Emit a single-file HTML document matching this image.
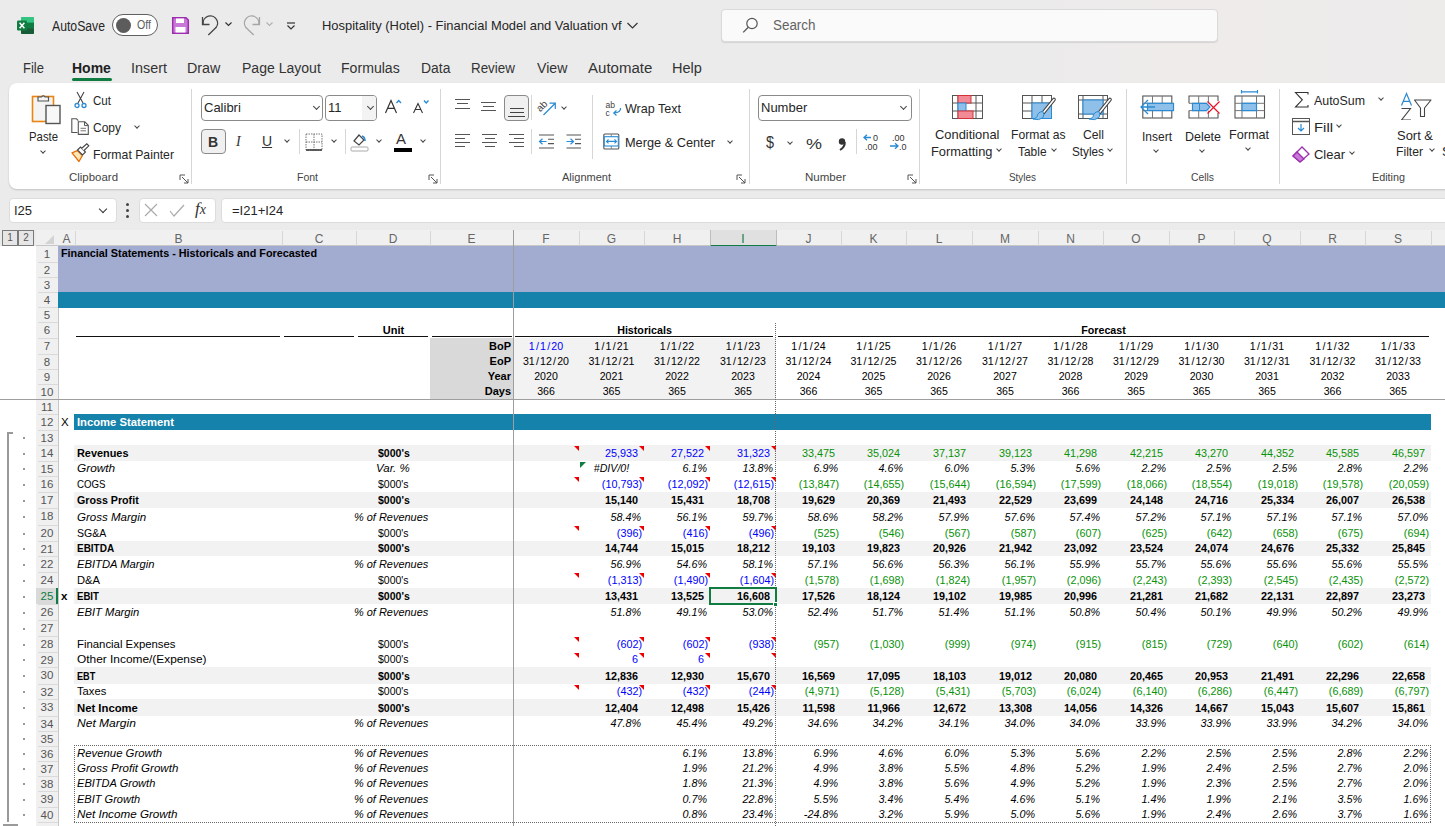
<!DOCTYPE html><html><head><meta charset="utf-8"><style>
*{box-sizing:border-box}
html,body{margin:0;padding:0}
body{width:1445px;height:826px;overflow:hidden;position:relative;background:#ebebeb;font-family:'Liberation Sans',sans-serif;color:#222}
.a{position:absolute;white-space:nowrap}
.tab{position:absolute;top:58px;font-size:14px;color:#333;line-height:18px}
.rl{position:absolute;font-size:12.3px;color:#262626;line-height:15px;white-space:nowrap}
.gl{position:absolute;font-size:12px;color:#444;line-height:14px;white-space:nowrap;text-align:center}
.sep{position:absolute;width:1px;background:#d6d6d6}
.chev{position:absolute;width:5px;height:5px;border-right:1.2px solid #444;border-bottom:1.2px solid #444;transform:rotate(45deg)}
.ch{position:absolute;color:#666;font-size:12px;line-height:12px;text-align:center}
.row{position:absolute;left:0;width:1445px}
.c{position:absolute;white-space:nowrap;font-size:11px;line-height:12px;color:#000}
.rh{position:absolute;left:36px;width:22px;text-align:center;font-size:11.5px;color:#555;line-height:12px}
.tri{position:absolute;width:0;height:0;border-top:5px solid #e00;border-left:5px solid transparent}
</style></head><body>
<div class="a" style="left:0;top:0;width:1445px;height:83px;background:linear-gradient(to right,#ebebeb 0%,#ebebeb 70%,#efebeb 82%,#eeebeb 90%,#edeceb 100%)"></div>
<svg class="a" style="left:16px;top:16px" width="19" height="19" viewBox="0 0 19 19">
<rect x="5" y="1" width="13" height="17" rx="1.5" fill="#21a366"/>
<rect x="5" y="1" width="13" height="5.7" rx="1" fill="#33c481"/>
<rect x="5" y="6.7" width="13" height="5.6" fill="#107c41"/>
<rect x="5" y="12.3" width="13" height="5.7" rx="1" fill="#185c37"/>
<rect x="1" y="4.5" width="10" height="10" rx="1.2" fill="#107c41"/>
<path d="M3.6 6.8 L8.4 12.2 M8.4 6.8 L3.6 12.2" stroke="#fff" stroke-width="1.5"/>
</svg>
<div class="a" style="left:52.00px;top:18.85px;font-size:14px;line-height:14px;color:#262626;transform:scaleX(0.8733);transform-origin:0 0;">AutoSave</div>
<div class="a" style="left:112px;top:14px;width:46px;height:22px;border:1px solid #606060;border-radius:11px;background:#fff"></div>
<div class="a" style="left:116px;top:18px;width:15px;height:15px;border-radius:8px;background:#5c5c5c"></div>
<div class="a" style="left:137.00px;top:19.22px;font-size:12.5px;line-height:12.5px;color:#5c5c5c;transform:scaleX(0.8485);transform-origin:0 0;">Off</div>
<svg class="a" style="left:171px;top:16px" width="19" height="19" viewBox="0 0 19 19">
<path d="M1.7 1.7h13.3l2.3 2.3v13.3h-15.6z" fill="#c977d8" stroke="#9b2fae" stroke-width="1.5"/>
<rect x="5" y="2.5" width="8" height="4.5" fill="#fff"/>
<rect x="4.5" y="11" width="10" height="5.5" fill="#fff"/>
</svg>
<svg class="a" style="left:200px;top:15px" width="22" height="21" viewBox="200 15 22 21">
<path d="M202.5 17 V24.5 H209.5" fill="none" stroke="#444" stroke-width="1.3"/>
<path d="M203.2 24 A7.2 7.2 0 1 1 214.5 29 L208.3 35" fill="none" stroke="#444" stroke-width="1.3"/>
</svg>
<svg class="a" style="left:224px;top:21px" width="9" height="7" viewBox="0 0 9 7"><path d="M1.5 1.5 L4.5 4.5 L7.5 1.5" fill="none" stroke="#333" stroke-width="1.2"/></svg>
<svg class="a" style="left:242px;top:15px" width="22" height="21" viewBox="242 15 22 21">
<path d="M259.5 17 V24.5 H252.5" fill="none" stroke="#a6a6a6" stroke-width="1.3"/>
<path d="M258.8 24 A7.2 7.2 0 1 0 247.5 29 L253.7 35" fill="none" stroke="#a6a6a6" stroke-width="1.3"/>
</svg>
<svg class="a" style="left:265px;top:21px" width="9" height="7" viewBox="0 0 9 7"><path d="M1.5 1.5 L4.5 4.5 L7.5 1.5" fill="none" stroke="#b0b0b0" stroke-width="1.1"/></svg>
<svg class="a" style="left:285px;top:20px" width="12" height="12" viewBox="0 0 12 12">
<path d="M2 3h8" stroke="#333" stroke-width="1.2"/><path d="M2.5 5.5 L6 9 L9.5 5.5" fill="none" stroke="#333" stroke-width="1.2"/></svg>
<div class="a" style="left:322.00px;top:19.27px;font-size:13.5px;line-height:13.5px;color:#262626;transform:scaleX(0.9579);transform-origin:0 0;">Hospitality (Hotel) - Financial Model and Valuation vf</div>
<svg class="a" style="left:626px;top:21px" width="13" height="9" viewBox="0 0 13 9"><path d="M1.5 2 L6.5 7 L11.5 2" fill="none" stroke="#333" stroke-width="1.2"/></svg>
<div class="a" style="left:721px;top:9px;width:497px;height:33px;background:#fafafa;border:1px solid #dadada;border-radius:4px;box-shadow:0 1px 1px rgba(0,0,0,.10)"></div>
<svg class="a" style="left:740px;top:15px" width="20" height="20" viewBox="740 15 20 20">
<circle cx="752" cy="23.5" r="5.2" fill="none" stroke="#555" stroke-width="1.2"/><path d="M748.3 27.3 L743.2 32.4" stroke="#555" stroke-width="1.3"/></svg>
<div class="a" style="left:773.00px;top:18.15px;font-size:14px;line-height:14px;color:#636363;transform:scaleX(0.9576);transform-origin:0 0;">Search</div>
<div class="a" style="left:22.90px;top:60.75px;font-size:14px;line-height:14px;color:#333;transform:scaleX(0.9272);transform-origin:0 0;">File</div>
<div class="a" style="left:72.20px;top:60.75px;font-size:14px;line-height:14px;color:#1f1f1f;transform:scaleX(0.9995);transform-origin:0 0;font-weight:bold;">Home</div>
<div class="a" style="left:131.00px;top:60.75px;font-size:14px;line-height:14px;color:#333;transform:scaleX(1.0257);transform-origin:0 0;">Insert</div>
<div class="a" style="left:187.30px;top:60.75px;font-size:14px;line-height:14px;color:#333;transform:scaleX(1.0217);transform-origin:0 0;">Draw</div>
<div class="a" style="left:241.60px;top:60.75px;font-size:14px;line-height:14px;color:#333;transform:scaleX(1.0024);transform-origin:0 0;">Page Layout</div>
<div class="a" style="left:341.30px;top:60.75px;font-size:14px;line-height:14px;color:#333;transform:scaleX(1.0072);transform-origin:0 0;">Formulas</div>
<div class="a" style="left:421.00px;top:60.75px;font-size:14px;line-height:14px;color:#333;transform:scaleX(0.9929);transform-origin:0 0;">Data</div>
<div class="a" style="left:471.30px;top:60.75px;font-size:14px;line-height:14px;color:#333;transform:scaleX(0.9560);transform-origin:0 0;">Review</div>
<div class="a" style="left:537.10px;top:60.75px;font-size:14px;line-height:14px;color:#333;transform:scaleX(1.0100);transform-origin:0 0;">View</div>
<div class="a" style="left:587.90px;top:60.75px;font-size:14px;line-height:14px;color:#333;transform:scaleX(1.0731);transform-origin:0 0;">Automate</div>
<div class="a" style="left:672.10px;top:60.75px;font-size:14px;line-height:14px;color:#333;transform:scaleX(1.0393);transform-origin:0 0;">Help</div>
<div class="a" style="left:72px;top:78px;width:40px;height:3px;background:#107c41;border-radius:2px"></div>
<div class="a" style="left:9px;top:83px;width:1460px;height:106px;background:#fff;border-radius:8px;box-shadow:0 1px 2px rgba(0,0,0,.18)"></div>
<svg class="a" style="left:30px;top:91px" width="32" height="34" viewBox="0 0 32 34">
<rect x="2.5" y="5.5" width="21" height="25" fill="#fdf3dc" stroke="#e8851a" stroke-width="1.6"/>
<rect x="4" y="7" width="18" height="22" fill="#f4f4f4"/>
<path d="M8 10 V6 h3.5 a2 2 0 0 1 3.5 0 h3.5 v4z" fill="#f4f4f4" stroke="#555" stroke-width="1.2"/>
<rect x="16" y="14.5" width="14" height="18" fill="#f8f8f8" stroke="#555" stroke-width="1.4"/>
</svg>
<div class="a" style="left:29.00px;top:129.57px;font-size:13.5px;line-height:13.5px;color:#262626;transform:scaleX(0.8408);transform-origin:0 0;">Paste</div>
<div class="chev" style="left:41px;top:149px;width:4px;height:4px"></div>
<svg class="a" style="left:73px;top:91px" width="15" height="18" viewBox="0 0 15 18">
<path d="M4 1 L10 12 M11 1 L5 12" stroke="#444" stroke-width="1.1" fill="none"/>
<circle cx="4" cy="14.5" r="2" fill="none" stroke="#2a8ad4" stroke-width="1.3"/><circle cx="11" cy="14.5" r="2" fill="none" stroke="#2a8ad4" stroke-width="1.3"/></svg>
<div class="a" style="left:93.00px;top:93.57px;font-size:13.5px;line-height:13.5px;color:#262626;transform:scaleX(0.8574);transform-origin:0 0;">Cut</div>
<svg class="a" style="left:69px;top:116px" width="22" height="21" viewBox="69 116 22 21">
<path d="M77.5 132.5 H71.8 V118.8 H76.5 L78.3 120.6" fill="none" stroke="#555" stroke-width="1.1"/>
<path d="M78.3 121.8 H84.8 L88.3 125.3 V134.4 H78.3z" fill="#fff" stroke="#555" stroke-width="1.1"/>
<path d="M84.5 122 V125.6 H88" fill="none" stroke="#555" stroke-width="1"/>
<path d="M80.5 128.3 H86 M80.5 130.8 H86" stroke="#666" stroke-width="0.9"/></svg>
<div class="a" style="left:93.00px;top:120.57px;font-size:13.5px;line-height:13.5px;color:#262626;transform:scaleX(0.8883);transform-origin:0 0;">Copy</div>
<div class="chev" style="left:135px;top:124px;width:4px;height:4px"></div>
<svg class="a" style="left:70px;top:143px" width="22" height="21" viewBox="70 143 22 21">
<path d="M72 152.8 L77.3 150.6 L82.3 155.6 L79 161.5z" fill="#fde6b8" stroke="#e8700a" stroke-width="1.3" stroke-linejoin="round"/>
<path d="M77.5 150 L80.5 147 L85.5 152 L82.5 155z" fill="#fff" stroke="#444" stroke-width="1.1"/>
<path d="M81.5 148.5 L86.8 143.8 L88.8 145.8 L84 150.5" fill="#fff" stroke="#444" stroke-width="1.1"/></svg>
<div class="a" style="left:93.00px;top:147.57px;font-size:13.5px;line-height:13.5px;color:#262626;transform:scaleX(0.9070);transform-origin:0 0;">Format Painter</div>
<div class="a" style="left:69.00px;top:172.27px;font-size:11.5px;line-height:11.5px;color:#444;transform:scaleX(0.9955);transform-origin:0 0;">Clipboard</div>
<svg class="a" style="left:179px;top:174px" width="10" height="10" viewBox="0 0 10 10">
<path d="M1 6 V1 H6" fill="none" stroke="#555" stroke-width="1"/><path d="M3 3 L9 9 M5 9 H9 V5" fill="none" stroke="#555" stroke-width="1"/></svg>
<div class="sep" style="left:191px;top:89px;height:95px"></div>
<div class="a" style="left:201px;top:95px;width:122px;height:26px;border:1px solid #8a8a8a;border-radius:4px;background:#fff"></div>
<div class="a" style="left:204px;top:100px;font-size:13px;color:#262626;line-height:16px">Calibri</div>
<div class="chev" style="left:314px;top:104px;width:5px;height:5px"></div>
<div class="a" style="left:325px;top:95px;width:52px;height:26px;border:1px solid #8a8a8a;border-radius:4px;background:#fff;overflow:hidden"><div style="position:absolute;right:0;top:0;width:14px;height:24px;background:#f3f3f3"></div></div>
<div class="a" style="left:328px;top:100px;font-size:13px;color:#262626;line-height:16px">11</div>
<div class="chev" style="left:368px;top:104px;width:5px;height:5px"></div>
<svg class="a" style="left:383px;top:97px" width="48" height="18" viewBox="383 97 48 18">
<path d="M385.5 113 L391 100.5 L396.5 113 M387.6 108.3 H394.4" fill="none" stroke="#333" stroke-width="1.2"/>
<path d="M396.5 103 L398.7 100.5 L401 103" fill="none" stroke="#2a8ad4" stroke-width="1.3"/>
<path d="M413.5 113 L418 103.5 L422.5 113 M415.2 109.5 H420.8" fill="none" stroke="#333" stroke-width="1.1"/>
<path d="M424 100.5 L426.2 103 L428.5 100.5" fill="none" stroke="#2a8ad4" stroke-width="1.3"/>
</svg>
<div class="a" style="left:201px;top:129px;width:25px;height:25px;border:1px solid #8a8a8a;border-radius:4px;background:#f0f0f0"></div>
<div class="a" style="left:208px;top:134px;font-size:14px;font-weight:bold;color:#333;line-height:16px">B</div>
<div class="a" style="left:236px;top:134px;font-size:14px;font-style:italic;color:#333;line-height:16px;font-family:Liberation Serif">I</div>
<div class="a" style="left:262px;top:133px;font-size:14px;text-decoration:underline;color:#333;line-height:16px">U</div>
<div class="chev" style="left:285px;top:138px;width:4px;height:4px"></div>
<div class="sep" style="left:299px;top:129px;height:25px"></div>
<svg class="a" style="left:305px;top:133px" width="18" height="18" viewBox="0 0 18 18">
<path d="M1 1h16v16H1z M9 1v16 M1 9h16" fill="none" stroke="#777" stroke-width="1" stroke-dasharray="1.5 1"/>
<path d="M1 17h16" stroke="#333" stroke-width="1.5"/></svg>
<div class="chev" style="left:332px;top:138px;width:4px;height:4px"></div>
<div class="sep" style="left:345px;top:129px;height:25px"></div>
<svg class="a" style="left:350px;top:132px" width="20" height="20" viewBox="0 0 20 20">
<path d="M4 9 L9 3 L14 8 L9 13z" fill="#fff" stroke="#444" stroke-width="1.2"/>
<path d="M12 4 q3 1 3 5" fill="none" stroke="#2a8ad4" stroke-width="1.6"/>
<rect x="1" y="15" width="17" height="4" rx="1" fill="#fff" stroke="#aaa"/></svg>
<div class="chev" style="left:377px;top:138px;width:4px;height:4px"></div>
<div class="a" style="left:396px;top:131px;font-size:15px;color:#333;line-height:16px">A</div>
<div class="a" style="left:394px;top:148px;width:18px;height:4px;background:#000"></div>
<div class="chev" style="left:421px;top:138px;width:4px;height:4px"></div>
<div class="a" style="left:297.00px;top:172.27px;font-size:11.5px;line-height:11.5px;color:#444;transform:scaleX(0.9130);transform-origin:0 0;">Font</div>
<svg class="a" style="left:428px;top:174px" width="10" height="10" viewBox="0 0 10 10">
<path d="M1 6 V1 H6" fill="none" stroke="#555" stroke-width="1"/><path d="M3 3 L9 9 M5 9 H9 V5" fill="none" stroke="#555" stroke-width="1"/></svg>
<div class="sep" style="left:440px;top:89px;height:95px"></div>
<div class="a" style="left:455px;top:99px;width:15px;height:1.3px;background:#555"></div><div class="a" style="left:457px;top:103px;width:11px;height:1.3px;background:#555"></div>
<div class="a" style="left:455px;top:108px;width:15px;height:1.3px;background:#555"></div>
<div class="a" style="left:481px;top:102px;width:15px;height:1.3px;background:#555"></div><div class="a" style="left:483px;top:106px;width:11px;height:1.3px;background:#555"></div><div class="a" style="left:481px;top:110px;width:15px;height:1.3px;background:#555"></div>
<div class="a" style="left:504px;top:95px;width:25px;height:26px;border:1px solid #8a8a8a;border-radius:4px;background:#f0f0f0"></div>
<div class="a" style="left:510px;top:108px;width:14px;height:1.3px;background:#444"></div><div class="a" style="left:510px;top:112px;width:14px;height:1.3px;background:#444"></div><div class="a" style="left:508px;top:116px;width:17px;height:1.3px;background:#444"></div>
<div class="sep" style="left:531px;top:95px;height:25px"></div>
<svg class="a" style="left:534px;top:96px" width="26" height="22" viewBox="534 96 26 22">
<text x="536" y="110" font-size="10" fill="#444" transform="rotate(-45 541 106)" font-family="Liberation Sans">ab</text>
<path d="M543.5 115 L555 103.5 M549.5 103.2 H555.3 V109" fill="none" stroke="#2a8ad4" stroke-width="1.2"/></svg>
<div class="chev" style="left:562px;top:105px;width:4px;height:4px"></div>
<div class="a" style="left:455px;top:134px;width:15px;height:1.3px;background:#555"></div><div class="a" style="left:455px;top:138px;width:10px;height:1.3px;background:#555"></div><div class="a" style="left:455px;top:142px;width:15px;height:1.3px;background:#555"></div><div class="a" style="left:455px;top:146px;width:10px;height:1.3px;background:#555"></div>
<div class="a" style="left:482.0px;top:134px;width:15px;height:1.3px;background:#555"></div><div class="a" style="left:484.5px;top:138px;width:10px;height:1.3px;background:#555"></div><div class="a" style="left:482.0px;top:142px;width:15px;height:1.3px;background:#555"></div><div class="a" style="left:484.5px;top:146px;width:10px;height:1.3px;background:#555"></div>
<div class="a" style="left:509px;top:134px;width:15px;height:1.3px;background:#555"></div><div class="a" style="left:514px;top:138px;width:10px;height:1.3px;background:#555"></div><div class="a" style="left:509px;top:142px;width:15px;height:1.3px;background:#555"></div><div class="a" style="left:514px;top:146px;width:10px;height:1.3px;background:#555"></div>
<div class="sep" style="left:531px;top:129px;height:25px"></div>
<svg class="a" style="left:536px;top:130px" width="50" height="22" viewBox="536 130 50 22">
<path d="M539 135 H554 M548 139.3 H554 M548 143.6 H554 M539 148 H554" stroke="#555" stroke-width="1.1"/>
<path d="M539.5 141.5 H546.5 M542.5 138.8 L539.5 141.5 L542.5 144.2" fill="none" stroke="#2a8ad4" stroke-width="1.2"/>
<path d="M566.5 135 H581 M575 139.3 H581 M575 143.6 H581 M566.5 148 H581" stroke="#555" stroke-width="1.1"/>
<path d="M566.5 141.5 H573.5 M570.5 138.8 L573.5 141.5 L570.5 144.2" fill="none" stroke="#2a8ad4" stroke-width="1.2"/></svg>
<div class="sep" style="left:592px;top:95px;height:64px"></div>
<svg class="a" style="left:603px;top:98px" width="22" height="20" viewBox="603 98 22 20">
<text x="605.5" y="107.5" font-size="8.5" fill="#444" font-family="Liberation Sans">ab</text><text x="605.5" y="115.5" font-size="8.5" fill="#444" font-family="Liberation Sans">c</text>
<path d="M620.5 108 Q621 112.5 614 113 M616.5 110.5 L613.8 113 L616.5 115.5" fill="none" stroke="#2a8ad4" stroke-width="1.2"/></svg>
<div class="a" style="left:625.00px;top:101.57px;font-size:13.5px;line-height:13.5px;color:#262626;transform:scaleX(0.9290);transform-origin:0 0;">Wrap Text</div>
<svg class="a" style="left:602px;top:132px" width="20" height="20" viewBox="602 132 20 20">
<rect x="603.8" y="134" width="15" height="15" rx="1" fill="#fff" stroke="#555" stroke-width="1.1"/>
<path d="M611.3 134 V149" stroke="#888" stroke-width="1"/>
<rect x="604.3" y="136.7" width="14" height="9.3" fill="#fff" stroke="#2a8ad4" stroke-width="1.1"/>
<path d="M606.5 141.4 H616.5 M608.5 139.4 L606.5 141.4 L608.5 143.4 M614.5 139.4 L616.5 141.4 L614.5 143.4" fill="none" stroke="#2a8ad4" stroke-width="1.1"/></svg>
<div class="a" style="left:625.00px;top:135.57px;font-size:13.5px;line-height:13.5px;color:#262626;transform:scaleX(0.9443);transform-origin:0 0;">Merge &amp; Center</div>
<div class="chev" style="left:728px;top:139px;width:4px;height:4px"></div>
<div class="a" style="left:562.00px;top:172.27px;font-size:11.5px;line-height:11.5px;color:#444;transform:scaleX(0.9586);transform-origin:0 0;">Alignment</div>
<svg class="a" style="left:736px;top:174px" width="10" height="10" viewBox="0 0 10 10">
<path d="M1 6 V1 H6" fill="none" stroke="#555" stroke-width="1"/><path d="M3 3 L9 9 M5 9 H9 V5" fill="none" stroke="#555" stroke-width="1"/></svg>
<div class="sep" style="left:749px;top:89px;height:95px"></div>
<div class="a" style="left:758px;top:95px;width:154px;height:26px;border:1px solid #8a8a8a;border-radius:4px;background:#fff"></div>
<div class="a" style="left:761px;top:100px;font-size:13px;color:#262626;line-height:16px">Number</div>
<div class="chev" style="left:901px;top:104px;width:5px;height:5px"></div>
<div class="a" style="left:766.00px;top:135.46px;font-size:16px;line-height:16px;color:#333;transform:scaleX(0.9009);transform-origin:0 0;">$</div>
<div class="chev" style="left:788px;top:140px;width:4px;height:4px"></div>
<div class="a" style="left:806.00px;top:136.30px;font-size:15px;line-height:15px;color:#333;transform:scaleX(1.1985);transform-origin:0 0;">%</div>
<svg class="a" style="left:836px;top:137px" width="12" height="14" viewBox="0 0 12 14"><circle cx="6" cy="4.5" r="3.2" fill="#333"/><path d="M8.8 5 Q9 10 4 13" fill="none" stroke="#333" stroke-width="2"/></svg>
<div class="sep" style="left:856px;top:129px;height:25px"></div>
<svg class="a" style="left:862px;top:133px" width="19" height="18" viewBox="0 0 19 18">
<path d="M9 4.5 H2 M5 1.8 L2 4.5 L5 7.2" fill="none" stroke="#2a8ad4" stroke-width="1.3"/>
<text x="11" y="8" font-size="9" fill="#333" font-family="Liberation Sans">0</text>
<text x="3" y="17" font-size="9" fill="#333" font-family="Liberation Sans">.00</text></svg>
<svg class="a" style="left:889px;top:133px" width="19" height="18" viewBox="0 0 19 18">
<text x="3" y="8" font-size="9" fill="#333" font-family="Liberation Sans">.00</text>
<path d="M1 13 H9 M6 10.3 L9 13 L6 15.7" fill="none" stroke="#2a8ad4" stroke-width="1.3"/>
<text x="10" y="17" font-size="9" fill="#333" font-family="Liberation Sans">.0</text></svg>
<div class="a" style="left:805.00px;top:172.27px;font-size:11.5px;line-height:11.5px;color:#444;transform:scaleX(1.0029);transform-origin:0 0;">Number</div>
<svg class="a" style="left:907px;top:174px" width="10" height="10" viewBox="0 0 10 10">
<path d="M1 6 V1 H6" fill="none" stroke="#555" stroke-width="1"/><path d="M3 3 L9 9 M5 9 H9 V5" fill="none" stroke="#555" stroke-width="1"/></svg>
<div class="sep" style="left:919px;top:89px;height:95px"></div>
<svg class="a" style="left:952px;top:95px" width="31" height="25" viewBox="0 0 31 25">
<rect x="0.5" y="0.5" width="30" height="23" fill="#fff" stroke="#555"/>
<path d="M0.5 8h30 M0.5 16h30 M6 0.5v23 M24 0.5v23" stroke="#555"/>
<rect x="6" y="0.5" width="13" height="7.5" fill="#f28b95" stroke="#d13438"/>
<rect x="6" y="8" width="8" height="8" fill="#8fc0ea" stroke="#2a8ad4"/>
<rect x="6" y="16" width="15" height="7.5" fill="#f28b95" stroke="#d13438"/></svg>
<div class="a" style="left:934.50px;top:128.07px;font-size:13.5px;line-height:13.5px;color:#262626;transform:scaleX(0.9546);transform-origin:0 0;">Conditional</div>
<div class="a" style="left:930.50px;top:145.07px;font-size:13.5px;line-height:13.5px;color:#262626;transform:scaleX(0.9530);transform-origin:0 0;">Formatting</div>
<div class="chev" style="left:997px;top:147px;width:4px;height:4px"></div>
<svg class="a" style="left:1022px;top:95px" width="35" height="30" viewBox="0 0 35 30">
<rect x="0.5" y="0.5" width="29" height="23" fill="#fff" stroke="#555"/>
<path d="M0.5 8h29 M0.5 16h29 M10 0.5v23 M20 0.5v23" stroke="#555"/>
<rect x="10" y="8" width="19.5" height="15.5" fill="#8fc0ea" stroke="#2a8ad4"/>
<path d="M32 4.5 L21.5 17.5" stroke="#444" stroke-width="3.6" stroke-linecap="round"/><path d="M32 4.5 L21.5 17.5" stroke="#fff" stroke-width="1.6" stroke-linecap="round"/><path d="M21 16.5 q-5 0 -6 5 q-1 2 -4 2.5 q6 2 10 -1.5 q1.5 -3 0 -6z" fill="#8fc0ea" stroke="#2a8ad4" stroke-width="1"/></svg>
<div class="a" style="left:1010.50px;top:128.07px;font-size:13.5px;line-height:13.5px;color:#262626;transform:scaleX(0.8971);transform-origin:0 0;">Format as</div>
<div class="a" style="left:1017.50px;top:145.07px;font-size:13.5px;line-height:13.5px;color:#262626;transform:scaleX(0.8833);transform-origin:0 0;">Table</div>
<div class="chev" style="left:1052px;top:147px;width:4px;height:4px"></div>
<svg class="a" style="left:1078px;top:95px" width="35" height="30" viewBox="0 0 35 30">
<rect x="0.5" y="0.5" width="29" height="23" fill="#fff" stroke="#555"/>
<path d="M0.5 5h29 M0.5 19h29 M5 0.5v23 M25 0.5v23" stroke="#555"/>
<rect x="5" y="5" width="20" height="14" fill="#8fc0ea" stroke="#2a8ad4"/>
<path d="M32 4.5 L21.5 17.5" stroke="#444" stroke-width="3.6" stroke-linecap="round"/><path d="M32 4.5 L21.5 17.5" stroke="#fff" stroke-width="1.6" stroke-linecap="round"/><path d="M21 16.5 q-5 0 -6 5 q-1 2 -4 2.5 q6 2 10 -1.5 q1.5 -3 0 -6z" fill="#8fc0ea" stroke="#2a8ad4" stroke-width="1"/></svg>
<div class="a" style="left:1083.00px;top:128.07px;font-size:13.5px;line-height:13.5px;color:#262626;transform:scaleX(0.9018);transform-origin:0 0;">Cell</div>
<div class="a" style="left:1072.00px;top:145.07px;font-size:13.5px;line-height:13.5px;color:#262626;transform:scaleX(0.8699);transform-origin:0 0;">Styles</div>
<div class="chev" style="left:1108px;top:147px;width:4px;height:4px"></div>
<div class="a" style="left:1009.00px;top:172.27px;font-size:11.5px;line-height:11.5px;color:#444;transform:scaleX(0.8616);transform-origin:0 0;">Styles</div>
<div class="sep" style="left:1126px;top:89px;height:95px"></div>
<svg class="a" style="left:1138px;top:88px" width="40" height="34" viewBox="1138 88 40 34">
<rect x="1142.8" y="96" width="29" height="22" fill="#fff" stroke="#555" stroke-width="1.1"/>
<path d="M1142.8 103.3h29 M1142.8 110.6h29 M1152.5 96v22 M1162.2 96v22" stroke="#777" stroke-width="1"/>
<rect x="1147.5" y="103.3" width="26" height="7.3" fill="#8fc0ea" stroke="#2a8ad4" stroke-width="1.2"/>
<path d="M1141 107 H1155 M1148 100 L1141 107 L1148 114" fill="none" stroke="#2a8ad4" stroke-width="1.3"/></svg>
<div class="a" style="left:1142.00px;top:130.07px;font-size:13.5px;line-height:13.5px;color:#262626;transform:scaleX(0.8889);transform-origin:0 0;">Insert</div>
<div class="chev" style="left:1154px;top:148px;width:4px;height:4px"></div>
<svg class="a" style="left:1185px;top:88px" width="40" height="34" viewBox="1185 88 40 34">
<path d="M1189 103.3 V96 H1218 V101 M1218 113 V118 H1189 V110.6" fill="#fff" stroke="#555" stroke-width="1.1"/>
<path d="M1189 103.3h18 M1189 110.6h18 M1198.7 96v7.3 M1208.4 96v7.3 M1198.7 110.6v7.4 M1208.4 110.6v7.4" stroke="#777" stroke-width="1"/>
<path d="M1192.5 103.3 H1206.5 L1210 107 L1206.5 110.6 H1192.5z" fill="#8fc0ea" stroke="#2a8ad4" stroke-width="1.2"/>
<path d="M1199.5 103.3 V110.6" stroke="#2a8ad4" stroke-width="1"/>
<path d="M1207.5 101.5 L1219.5 113.5 M1219.5 101.5 L1207.5 113.5" stroke="#e81123" stroke-width="1.2"/></svg>
<div class="a" style="left:1185.00px;top:130.07px;font-size:13.5px;line-height:13.5px;color:#262626;transform:scaleX(0.9227);transform-origin:0 0;">Delete</div>
<div class="chev" style="left:1200px;top:148px;width:4px;height:4px"></div>
<svg class="a" style="left:1232px;top:88px" width="36" height="34" viewBox="1232 88 36 34">
<path d="M1241.5 91.8 H1257.5 M1241.5 90 V93.5 M1257.5 90 V93.5" stroke="#2a8ad4" stroke-width="1.2"/>
<rect x="1235" y="96" width="29.5" height="22" fill="#fff" stroke="#555" stroke-width="1.1"/>
<path d="M1235 103.3h29.5 M1235 110.6h29.5 M1242 96v22 M1256.5 96v22" stroke="#777" stroke-width="1"/>
<rect x="1242" y="103.3" width="14.5" height="7.3" fill="#8fc0ea" stroke="#2a8ad4" stroke-width="1.2"/></svg>
<div class="a" style="left:1229.00px;top:128.07px;font-size:13.5px;line-height:13.5px;color:#262626;transform:scaleX(0.9362);transform-origin:0 0;">Format</div>
<div class="chev" style="left:1246px;top:146px;width:4px;height:4px"></div>
<div class="a" style="left:1191.00px;top:172.27px;font-size:11.5px;line-height:11.5px;color:#444;transform:scaleX(0.8989);transform-origin:0 0;">Cells</div>
<div class="sep" style="left:1279px;top:89px;height:95px"></div>
<svg class="a" style="left:1290px;top:88px" width="22" height="22" viewBox="1290 88 22 22"><path d="M1308 94.5 V92.5 H1295.5 L1302.3 99.8 L1295.5 107 H1308 V105" fill="none" stroke="#333" stroke-width="1.1"/></svg>
<div class="a" style="left:1314.00px;top:94.07px;font-size:13.5px;line-height:13.5px;color:#262626;transform:scaleX(0.9181);transform-origin:0 0;">AutoSum</div>
<div class="chev" style="left:1379px;top:96px;width:4px;height:4px"></div>
<svg class="a" style="left:1292px;top:118px" width="18" height="17" viewBox="0 0 18 17">
<rect x="0.5" y="0.5" width="17" height="16" fill="#fff" stroke="#555"/><path d="M0.5 3.5h17" stroke="#555" stroke-width="1.5"/>
<path d="M9 6v7 M6 10 L9 13 L12 10" fill="none" stroke="#2a8ad4" stroke-width="1.2"/></svg>
<div class="a" style="left:1314.00px;top:120.57px;font-size:13.5px;line-height:13.5px;color:#262626;transform:scaleX(1.1038);transform-origin:0 0;">Fill</div>
<div class="chev" style="left:1337px;top:123px;width:4px;height:4px"></div>
<svg class="a" style="left:1292px;top:145px" width="18" height="18" viewBox="0 0 18 18">
<path d="M1 11 L10 2 L17 9 L8 17z" fill="#fff" stroke="#9b2fae" stroke-width="1.3"/><path d="M1 11 L5 7 L12 14 L8 17z" fill="#c977d8" stroke="#9b2fae" stroke-width="1.3"/></svg>
<div class="a" style="left:1314.00px;top:147.57px;font-size:13.5px;line-height:13.5px;color:#262626;transform:scaleX(0.9608);transform-origin:0 0;">Clear</div>
<div class="chev" style="left:1350px;top:150px;width:4px;height:4px"></div>
<svg class="a" style="left:1398px;top:90px" width="36" height="30" viewBox="1398 90 36 30">
<path d="M1401.5 105.5 L1406.5 93.5 L1411.5 105.5 M1403.3 101.3 H1409.7" fill="none" stroke="#2a8ad4" stroke-width="1.2"/>
<path d="M1401.5 108.5 H1410.5 L1401.5 120 H1411" fill="none" stroke="#444" stroke-width="1.1"/>
<path d="M1414.5 100 H1431 L1424.5 108 V116.5 H1420.5 V108z" fill="#fff" stroke="#444" stroke-width="1.1" stroke-linejoin="round"/></svg>
<div class="a" style="left:1397.00px;top:128.57px;font-size:13.5px;line-height:13.5px;color:#262626;transform:scaleX(0.9592);transform-origin:0 0;">Sort &amp;</div>
<div class="a" style="left:1396.00px;top:145.07px;font-size:13.5px;line-height:13.5px;color:#262626;transform:scaleX(0.9009);transform-origin:0 0;">Filter</div>
<div class="chev" style="left:1430px;top:147px;width:4px;height:4px"></div>
<div class="a" style="left:1372.00px;top:172.27px;font-size:11.5px;line-height:11.5px;color:#444;transform:scaleX(0.9378);transform-origin:0 0;">Editing</div>
<div class="a" style="left:1442px;top:144.5px;font-size:13.5px;line-height:13.5px;color:#262626">S</div>
<div class="a" style="left:9px;top:198px;width:108px;height:25px;background:#fff;border:1px solid #dcdcdc;border-radius:4px"></div>
<div class="a" style="left:14px;top:203px;font-size:13px;color:#262626;line-height:15px">I25</div>
<div class="chev" style="left:100px;top:206px;width:6px;height:6px;border-color:#333"></div>
<div class="a" style="left:126px;top:203px;width:3px;height:3px;border-radius:2px;background:#444"></div><div class="a" style="left:126px;top:209px;width:3px;height:3px;border-radius:2px;background:#444"></div><div class="a" style="left:126px;top:215px;width:3px;height:3px;border-radius:2px;background:#444"></div>
<div class="a" style="left:139px;top:198px;width:77px;height:25px;background:#fff;border:1px solid #dcdcdc;border-radius:4px"></div>
<svg class="a" style="left:143px;top:202px" width="70" height="18" viewBox="0 0 70 18">
<path d="M2 2 L14 14 M14 2 L2 14" stroke="#aaa" stroke-width="1.2"/>
<path d="M27 9 L31 14 L41 3" fill="none" stroke="#aaa" stroke-width="1.2"/></svg>
<div class="a" style="left:195px;top:199px;font-size:17px;font-style:italic;color:#333;line-height:20px;font-family:Liberation Serif">f<span style="font-size:14px">x</span></div>
<div class="a" style="left:221px;top:198px;width:1240px;height:25px;background:#fff;border:1px solid #dcdcdc;border-radius:4px"></div>
<div class="a" style="left:232px;top:203px;font-size:13px;color:#262626;line-height:15px">=I21+I24</div>
<div class="a" style="left:0;top:246px;width:1445px;height:580px;background:#fff"></div>
<div class="a" style="left:36px;top:230px;width:1409px;height:16px;background:#f0f0f0;border-bottom:1px solid #c6c6c6"></div>
<div class="a" style="left:36px;top:246px;width:23px;height:580px;background:#f0f0f0;border-right:1px solid #c6c6c6"></div>
<div class="a" style="left:2px;top:230px;width:16px;height:16px;border:1px solid #7a7a7a;background:#e6e6e6;font-size:10px;color:#555;text-align:center;line-height:14px">1</div>
<div class="a" style="left:18px;top:230px;width:16px;height:16px;border:1px solid #7a7a7a;background:#e6e6e6;font-size:10px;color:#555;text-align:center;line-height:14px">2</div>
<div class="a" style="left:45px;top:235px;width:0;height:0;border-bottom:9px solid #d3d3d3;border-left:9px solid transparent"></div>
<div class="ch" style="left:58px;top:233px;width:17px;">A</div>
<div class="ch" style="left:75px;top:233px;width:207px;">B</div>
<div class="a" style="left:75px;top:231px;width:1px;height:15px;background:#d6d6d6"></div>
<div class="ch" style="left:282px;top:233px;width:74px;">C</div>
<div class="a" style="left:282px;top:231px;width:1px;height:15px;background:#d6d6d6"></div>
<div class="ch" style="left:356px;top:233px;width:74px;">D</div>
<div class="a" style="left:356px;top:231px;width:1px;height:15px;background:#d6d6d6"></div>
<div class="ch" style="left:430px;top:233px;width:83px;">E</div>
<div class="a" style="left:430px;top:231px;width:1px;height:15px;background:#d6d6d6"></div>
<div class="ch" style="left:513px;top:233px;width:66px;">F</div>
<div class="a" style="left:513px;top:231px;width:1px;height:15px;background:#d6d6d6"></div>
<div class="ch" style="left:579px;top:233px;width:65px;">G</div>
<div class="a" style="left:579px;top:231px;width:1px;height:15px;background:#d6d6d6"></div>
<div class="ch" style="left:644px;top:233px;width:66px;">H</div>
<div class="a" style="left:644px;top:231px;width:1px;height:15px;background:#d6d6d6"></div>
<div class="a" style="left:710px;top:230px;width:67px;height:17px;background:#e0e0e0;border-left:1px solid #bdbdbd;border-right:1px solid #bdbdbd;border-bottom:2px solid #107c41"></div>
<div class="ch" style="left:710px;top:233px;width:66px;color:#107c41;">I</div>
<div class="ch" style="left:776px;top:233px;width:65px;">J</div>
<div class="ch" style="left:841px;top:233px;width:65px;">K</div>
<div class="a" style="left:841px;top:231px;width:1px;height:15px;background:#d6d6d6"></div>
<div class="ch" style="left:906px;top:233px;width:66px;">L</div>
<div class="a" style="left:906px;top:231px;width:1px;height:15px;background:#d6d6d6"></div>
<div class="ch" style="left:972px;top:233px;width:66px;">M</div>
<div class="a" style="left:972px;top:231px;width:1px;height:15px;background:#d6d6d6"></div>
<div class="ch" style="left:1038px;top:233px;width:65px;">N</div>
<div class="a" style="left:1038px;top:231px;width:1px;height:15px;background:#d6d6d6"></div>
<div class="ch" style="left:1103px;top:233px;width:66px;">O</div>
<div class="a" style="left:1103px;top:231px;width:1px;height:15px;background:#d6d6d6"></div>
<div class="ch" style="left:1169px;top:233px;width:65px;">P</div>
<div class="a" style="left:1169px;top:231px;width:1px;height:15px;background:#d6d6d6"></div>
<div class="ch" style="left:1234px;top:233px;width:66px;">Q</div>
<div class="a" style="left:1234px;top:231px;width:1px;height:15px;background:#d6d6d6"></div>
<div class="ch" style="left:1300px;top:233px;width:65px;">R</div>
<div class="a" style="left:1300px;top:231px;width:1px;height:15px;background:#d6d6d6"></div>
<div class="ch" style="left:1365px;top:233px;width:66px;">S</div>
<div class="a" style="left:1365px;top:231px;width:1px;height:15px;background:#d6d6d6"></div>
<div class="ch" style="left:1431px;top:233px;width:66px;">T</div>
<div class="a" style="left:1431px;top:231px;width:1px;height:15px;background:#d6d6d6"></div>
<div class="rh" style="top:248px;">1</div>
<div class="a" style="left:38px;top:262px;width:20px;height:1px;background:#dadada"></div>
<div class="rh" style="top:264px;">2</div>
<div class="a" style="left:38px;top:277px;width:20px;height:1px;background:#dadada"></div>
<div class="rh" style="top:279px;">3</div>
<div class="a" style="left:38px;top:292px;width:20px;height:1px;background:#dadada"></div>
<div class="rh" style="top:294px;">4</div>
<div class="a" style="left:38px;top:307px;width:20px;height:1px;background:#dadada"></div>
<div class="rh" style="top:309px;">5</div>
<div class="a" style="left:38px;top:322px;width:20px;height:1px;background:#dadada"></div>
<div class="rh" style="top:324px;">6</div>
<div class="a" style="left:38px;top:338px;width:20px;height:1px;background:#dadada"></div>
<div class="rh" style="top:340px;">7</div>
<div class="a" style="left:38px;top:354px;width:20px;height:1px;background:#dadada"></div>
<div class="rh" style="top:356px;">8</div>
<div class="a" style="left:38px;top:369px;width:20px;height:1px;background:#dadada"></div>
<div class="rh" style="top:371px;">9</div>
<div class="a" style="left:38px;top:384px;width:20px;height:1px;background:#dadada"></div>
<div class="rh" style="top:386px;">10</div>
<div class="a" style="left:38px;top:399px;width:20px;height:1px;background:#dadada"></div>
<div class="rh" style="top:401px;">11</div>
<div class="a" style="left:38px;top:414px;width:20px;height:1px;background:#dadada"></div>
<div class="rh" style="top:416px;">12</div>
<div class="a" style="left:38px;top:430px;width:20px;height:1px;background:#dadada"></div>
<div class="rh" style="top:432px;">13</div>
<div class="a" style="left:38px;top:445px;width:20px;height:1px;background:#dadada"></div>
<div class="rh" style="top:447px;">14</div>
<div class="a" style="left:38px;top:461px;width:20px;height:1px;background:#dadada"></div>
<div class="rh" style="top:463px;">15</div>
<div class="a" style="left:38px;top:476px;width:20px;height:1px;background:#dadada"></div>
<div class="rh" style="top:478px;">16</div>
<div class="a" style="left:38px;top:492px;width:20px;height:1px;background:#dadada"></div>
<div class="rh" style="top:494px;">17</div>
<div class="a" style="left:38px;top:508px;width:20px;height:1px;background:#dadada"></div>
<div class="rh" style="top:510px;">18</div>
<div class="a" style="left:38px;top:525px;width:20px;height:1px;background:#dadada"></div>
<div class="rh" style="top:527px;">20</div>
<div class="a" style="left:38px;top:541px;width:20px;height:1px;background:#dadada"></div>
<div class="rh" style="top:543px;">21</div>
<div class="a" style="left:38px;top:556px;width:20px;height:1px;background:#dadada"></div>
<div class="rh" style="top:558px;">22</div>
<div class="a" style="left:38px;top:572px;width:20px;height:1px;background:#dadada"></div>
<div class="rh" style="top:574px;">24</div>
<div class="a" style="left:38px;top:588px;width:20px;height:1px;background:#dadada"></div>
<div class="a" style="left:36px;top:588px;width:22px;height:16px;background:#d9d9d9;border-right:2px solid #107c41"></div>
<div class="rh" style="top:590px;color:#107c41;">25</div>
<div class="a" style="left:38px;top:604px;width:20px;height:1px;background:#dadada"></div>
<div class="rh" style="top:606px;">26</div>
<div class="a" style="left:38px;top:620px;width:20px;height:1px;background:#dadada"></div>
<div class="rh" style="top:622px;">27</div>
<div class="a" style="left:38px;top:636px;width:20px;height:1px;background:#dadada"></div>
<div class="rh" style="top:638px;">28</div>
<div class="a" style="left:38px;top:652px;width:20px;height:1px;background:#dadada"></div>
<div class="rh" style="top:654px;">29</div>
<div class="a" style="left:38px;top:667px;width:20px;height:1px;background:#dadada"></div>
<div class="rh" style="top:669px;">30</div>
<div class="a" style="left:38px;top:684px;width:20px;height:1px;background:#dadada"></div>
<div class="rh" style="top:686px;">32</div>
<div class="a" style="left:38px;top:699px;width:20px;height:1px;background:#dadada"></div>
<div class="rh" style="top:701px;">33</div>
<div class="a" style="left:38px;top:716px;width:20px;height:1px;background:#dadada"></div>
<div class="rh" style="top:718px;">34</div>
<div class="a" style="left:38px;top:731px;width:20px;height:1px;background:#dadada"></div>
<div class="rh" style="top:733px;">35</div>
<div class="a" style="left:38px;top:746px;width:20px;height:1px;background:#dadada"></div>
<div class="rh" style="top:748px;">36</div>
<div class="a" style="left:38px;top:761px;width:20px;height:1px;background:#dadada"></div>
<div class="rh" style="top:763px;">37</div>
<div class="a" style="left:38px;top:776px;width:20px;height:1px;background:#dadada"></div>
<div class="rh" style="top:778px;">38</div>
<div class="a" style="left:38px;top:791px;width:20px;height:1px;background:#dadada"></div>
<div class="rh" style="top:793px;">39</div>
<div class="a" style="left:38px;top:807px;width:20px;height:1px;background:#dadada"></div>
<div class="rh" style="top:809px;">40</div>
<div class="a" style="left:38px;top:822px;width:20px;height:1px;background:#dadada"></div>
<div class="a" style="left:58px;top:246px;width:1387px;height:46px;background:#a2abd0"></div>
<div class="a" style="left:58px;top:292px;width:1387px;height:16px;background:#1582ab"></div>
<div class="a" style="left:430px;top:338px;width:83px;height:61px;background:#d9d9d9"></div>
<div class="a" style="left:513px;top:338px;width:263px;height:61px;background:#f2f2f2"></div>
<div class="a" style="left:74px;top:414px;width:1357px;height:16px;background:#1582ab"></div>
<div class="a" style="left:74px;top:445px;width:1357px;height:16px;background:#f2f2f2"></div>
<div class="a" style="left:74px;top:492px;width:1357px;height:16px;background:#f2f2f2"></div>
<div class="a" style="left:74px;top:541px;width:1357px;height:15px;background:#f2f2f2"></div>
<div class="a" style="left:74px;top:588px;width:1357px;height:16px;background:#f2f2f2"></div>
<div class="a" style="left:74px;top:667px;width:1357px;height:17px;background:#f2f2f2"></div>
<div class="a" style="left:74px;top:699px;width:1357px;height:17px;background:#f2f2f2"></div>
<div class="a" style="left:76px;top:336px;width:204px;height:1px;background:#111"></div>
<div class="a" style="left:284px;top:336px;width:70px;height:1px;background:#111"></div>
<div class="a" style="left:358px;top:336px;width:70px;height:1px;background:#111"></div>
<div class="a" style="left:432px;top:336px;width:80px;height:1px;background:#111"></div>
<div class="a" style="left:515px;top:336px;width:258px;height:1px;background:#111"></div>
<div class="a" style="left:778px;top:336px;width:651px;height:1px;background:#111"></div>
<div class="a" style="left:61.00px;top:248.19px;font-size:11px;line-height:11px;color:#000;transform:scaleX(0.9830);transform-origin:0 0;font-weight:bold;">Financial Statements - Historicals and Forecasted</div>
<div class="c" style="top:324px;font-size:11px;color:#000;font-weight:bold;left:293.5px;width:200px;text-align:center;">Unit</div>
<div class="c" style="top:324px;font-size:10.7px;color:#000;font-weight:bold;left:544.5px;width:200px;text-align:center;">Historicals</div>
<div class="c" style="top:324px;font-size:10.7px;color:#000;font-weight:bold;left:1003.5px;width:200px;text-align:center;">Forecast</div>
<div class="c" style="top:340px;font-size:11px;color:#000;font-weight:bold;right:934px;">BoP</div>
<div class="c" style="top:355px;font-size:11px;color:#000;font-weight:bold;right:934px;">EoP</div>
<div class="c" style="top:370px;font-size:11px;color:#000;font-weight:bold;right:934px;">Year</div>
<div class="c" style="top:385px;font-size:11px;color:#000;font-weight:bold;right:934px;">Days</div>
<div class="c" style="top:340px;font-size:10.6px;color:#0000ff;left:446.0px;width:200px;text-align:center;">1<span style="padding:0 1.2px">/</span>1<span style="padding:0 1.2px">/</span>20</div>
<div class="c" style="top:355px;font-size:10.6px;color:#000;left:446.0px;width:200px;text-align:center;">31<span style="padding:0 1.2px">/</span>12<span style="padding:0 1.2px">/</span>20</div>
<div class="c" style="top:370px;font-size:10.6px;color:#000;left:446.0px;width:200px;text-align:center;">2020</div>
<div class="c" style="top:385px;font-size:10.6px;color:#000;left:446.0px;width:200px;text-align:center;">366</div>
<div class="c" style="top:340px;font-size:10.6px;color:#000;left:511.5px;width:200px;text-align:center;">1<span style="padding:0 1.2px">/</span>1<span style="padding:0 1.2px">/</span>21</div>
<div class="c" style="top:355px;font-size:10.6px;color:#000;left:511.5px;width:200px;text-align:center;">31<span style="padding:0 1.2px">/</span>12<span style="padding:0 1.2px">/</span>21</div>
<div class="c" style="top:370px;font-size:10.6px;color:#000;left:511.5px;width:200px;text-align:center;">2021</div>
<div class="c" style="top:385px;font-size:10.6px;color:#000;left:511.5px;width:200px;text-align:center;">365</div>
<div class="c" style="top:340px;font-size:10.6px;color:#000;left:577.0px;width:200px;text-align:center;">1<span style="padding:0 1.2px">/</span>1<span style="padding:0 1.2px">/</span>22</div>
<div class="c" style="top:355px;font-size:10.6px;color:#000;left:577.0px;width:200px;text-align:center;">31<span style="padding:0 1.2px">/</span>12<span style="padding:0 1.2px">/</span>22</div>
<div class="c" style="top:370px;font-size:10.6px;color:#000;left:577.0px;width:200px;text-align:center;">2022</div>
<div class="c" style="top:385px;font-size:10.6px;color:#000;left:577.0px;width:200px;text-align:center;">365</div>
<div class="c" style="top:340px;font-size:10.6px;color:#000;left:643.0px;width:200px;text-align:center;">1<span style="padding:0 1.2px">/</span>1<span style="padding:0 1.2px">/</span>23</div>
<div class="c" style="top:355px;font-size:10.6px;color:#000;left:643.0px;width:200px;text-align:center;">31<span style="padding:0 1.2px">/</span>12<span style="padding:0 1.2px">/</span>23</div>
<div class="c" style="top:370px;font-size:10.6px;color:#000;left:643.0px;width:200px;text-align:center;">2023</div>
<div class="c" style="top:385px;font-size:10.6px;color:#000;left:643.0px;width:200px;text-align:center;">365</div>
<div class="c" style="top:340px;font-size:10.6px;color:#000;left:708.5px;width:200px;text-align:center;">1<span style="padding:0 1.2px">/</span>1<span style="padding:0 1.2px">/</span>24</div>
<div class="c" style="top:355px;font-size:10.6px;color:#000;left:708.5px;width:200px;text-align:center;">31<span style="padding:0 1.2px">/</span>12<span style="padding:0 1.2px">/</span>24</div>
<div class="c" style="top:370px;font-size:10.6px;color:#000;left:708.5px;width:200px;text-align:center;">2024</div>
<div class="c" style="top:385px;font-size:10.6px;color:#000;left:708.5px;width:200px;text-align:center;">366</div>
<div class="c" style="top:340px;font-size:10.6px;color:#000;left:773.5px;width:200px;text-align:center;">1<span style="padding:0 1.2px">/</span>1<span style="padding:0 1.2px">/</span>25</div>
<div class="c" style="top:355px;font-size:10.6px;color:#000;left:773.5px;width:200px;text-align:center;">31<span style="padding:0 1.2px">/</span>12<span style="padding:0 1.2px">/</span>25</div>
<div class="c" style="top:370px;font-size:10.6px;color:#000;left:773.5px;width:200px;text-align:center;">2025</div>
<div class="c" style="top:385px;font-size:10.6px;color:#000;left:773.5px;width:200px;text-align:center;">365</div>
<div class="c" style="top:340px;font-size:10.6px;color:#000;left:839.0px;width:200px;text-align:center;">1<span style="padding:0 1.2px">/</span>1<span style="padding:0 1.2px">/</span>26</div>
<div class="c" style="top:355px;font-size:10.6px;color:#000;left:839.0px;width:200px;text-align:center;">31<span style="padding:0 1.2px">/</span>12<span style="padding:0 1.2px">/</span>26</div>
<div class="c" style="top:370px;font-size:10.6px;color:#000;left:839.0px;width:200px;text-align:center;">2026</div>
<div class="c" style="top:385px;font-size:10.6px;color:#000;left:839.0px;width:200px;text-align:center;">365</div>
<div class="c" style="top:340px;font-size:10.6px;color:#000;left:905.0px;width:200px;text-align:center;">1<span style="padding:0 1.2px">/</span>1<span style="padding:0 1.2px">/</span>27</div>
<div class="c" style="top:355px;font-size:10.6px;color:#000;left:905.0px;width:200px;text-align:center;">31<span style="padding:0 1.2px">/</span>12<span style="padding:0 1.2px">/</span>27</div>
<div class="c" style="top:370px;font-size:10.6px;color:#000;left:905.0px;width:200px;text-align:center;">2027</div>
<div class="c" style="top:385px;font-size:10.6px;color:#000;left:905.0px;width:200px;text-align:center;">365</div>
<div class="c" style="top:340px;font-size:10.6px;color:#000;left:970.5px;width:200px;text-align:center;">1<span style="padding:0 1.2px">/</span>1<span style="padding:0 1.2px">/</span>28</div>
<div class="c" style="top:355px;font-size:10.6px;color:#000;left:970.5px;width:200px;text-align:center;">31<span style="padding:0 1.2px">/</span>12<span style="padding:0 1.2px">/</span>28</div>
<div class="c" style="top:370px;font-size:10.6px;color:#000;left:970.5px;width:200px;text-align:center;">2028</div>
<div class="c" style="top:385px;font-size:10.6px;color:#000;left:970.5px;width:200px;text-align:center;">366</div>
<div class="c" style="top:340px;font-size:10.6px;color:#000;left:1036.0px;width:200px;text-align:center;">1<span style="padding:0 1.2px">/</span>1<span style="padding:0 1.2px">/</span>29</div>
<div class="c" style="top:355px;font-size:10.6px;color:#000;left:1036.0px;width:200px;text-align:center;">31<span style="padding:0 1.2px">/</span>12<span style="padding:0 1.2px">/</span>29</div>
<div class="c" style="top:370px;font-size:10.6px;color:#000;left:1036.0px;width:200px;text-align:center;">2029</div>
<div class="c" style="top:385px;font-size:10.6px;color:#000;left:1036.0px;width:200px;text-align:center;">365</div>
<div class="c" style="top:340px;font-size:10.6px;color:#000;left:1101.5px;width:200px;text-align:center;">1<span style="padding:0 1.2px">/</span>1<span style="padding:0 1.2px">/</span>30</div>
<div class="c" style="top:355px;font-size:10.6px;color:#000;left:1101.5px;width:200px;text-align:center;">31<span style="padding:0 1.2px">/</span>12<span style="padding:0 1.2px">/</span>30</div>
<div class="c" style="top:370px;font-size:10.6px;color:#000;left:1101.5px;width:200px;text-align:center;">2030</div>
<div class="c" style="top:385px;font-size:10.6px;color:#000;left:1101.5px;width:200px;text-align:center;">365</div>
<div class="c" style="top:340px;font-size:10.6px;color:#000;left:1167.0px;width:200px;text-align:center;">1<span style="padding:0 1.2px">/</span>1<span style="padding:0 1.2px">/</span>31</div>
<div class="c" style="top:355px;font-size:10.6px;color:#000;left:1167.0px;width:200px;text-align:center;">31<span style="padding:0 1.2px">/</span>12<span style="padding:0 1.2px">/</span>31</div>
<div class="c" style="top:370px;font-size:10.6px;color:#000;left:1167.0px;width:200px;text-align:center;">2031</div>
<div class="c" style="top:385px;font-size:10.6px;color:#000;left:1167.0px;width:200px;text-align:center;">365</div>
<div class="c" style="top:340px;font-size:10.6px;color:#000;left:1232.5px;width:200px;text-align:center;">1<span style="padding:0 1.2px">/</span>1<span style="padding:0 1.2px">/</span>32</div>
<div class="c" style="top:355px;font-size:10.6px;color:#000;left:1232.5px;width:200px;text-align:center;">31<span style="padding:0 1.2px">/</span>12<span style="padding:0 1.2px">/</span>32</div>
<div class="c" style="top:370px;font-size:10.6px;color:#000;left:1232.5px;width:200px;text-align:center;">2032</div>
<div class="c" style="top:385px;font-size:10.6px;color:#000;left:1232.5px;width:200px;text-align:center;">366</div>
<div class="c" style="top:340px;font-size:10.6px;color:#000;left:1298.0px;width:200px;text-align:center;">1<span style="padding:0 1.2px">/</span>1<span style="padding:0 1.2px">/</span>33</div>
<div class="c" style="top:355px;font-size:10.6px;color:#000;left:1298.0px;width:200px;text-align:center;">31<span style="padding:0 1.2px">/</span>12<span style="padding:0 1.2px">/</span>33</div>
<div class="c" style="top:370px;font-size:10.6px;color:#000;left:1298.0px;width:200px;text-align:center;">2033</div>
<div class="c" style="top:385px;font-size:10.6px;color:#000;left:1298.0px;width:200px;text-align:center;">365</div>
<div class="c" style="top:416px;font-size:11.5px;color:#000;left:61px;">X</div>
<div class="c" style="top:590px;font-size:11.5px;color:#000;font-weight:bold;left:61px;">x</div>
<div class="a" style="left:76.70px;top:417.09px;font-size:11px;line-height:11px;color:#fff;transform:scaleX(1.0225);transform-origin:0 0;font-weight:bold;">Income Statement</div>
<div class="a" style="left:76.70px;top:448.09px;font-size:11px;line-height:11px;color:#000;transform:scaleX(0.9909);transform-origin:0 0;font-weight:bold;">Revenues</div>
<div class="a" style="left:377.60px;top:448.09px;font-size:11px;line-height:11px;color:#000;transform:scaleX(0.9573);transform-origin:0 0;font-weight:bold;">$000&#39;s</div>
<div class="a" style="left:76.70px;top:463.09px;font-size:11px;line-height:11px;color:#000;transform:scaleX(1.0768);transform-origin:0 0;font-style:italic;">Growth</div>
<div class="a" style="left:375.70px;top:463.09px;font-size:11px;line-height:11px;color:#000;transform:scaleX(1.0474);transform-origin:0 0;font-style:italic;">Var. %</div>
<div class="a" style="left:76.70px;top:479.09px;font-size:11px;line-height:11px;color:#000;transform:scaleX(0.8798);transform-origin:0 0;">COGS</div>
<div class="a" style="left:378.20px;top:479.09px;font-size:11px;line-height:11px;color:#000;transform:scaleX(0.9543);transform-origin:0 0;">$000&#39;s</div>
<div class="a" style="left:76.70px;top:495.09px;font-size:11px;line-height:11px;color:#000;transform:scaleX(0.9704);transform-origin:0 0;font-weight:bold;">Gross Profit</div>
<div class="a" style="left:377.60px;top:495.09px;font-size:11px;line-height:11px;color:#000;transform:scaleX(0.9573);transform-origin:0 0;font-weight:bold;">$000&#39;s</div>
<div class="a" style="left:76.70px;top:512.09px;font-size:11px;line-height:11px;color:#000;transform:scaleX(1.0485);transform-origin:0 0;font-style:italic;">Gross Margin</div>
<div class="a" style="left:354.30px;top:512.09px;font-size:11px;line-height:11px;color:#000;transform:scaleX(0.9949);transform-origin:0 0;font-style:italic;">% of Revenues</div>
<div class="a" style="left:76.70px;top:528.09px;font-size:11px;line-height:11px;color:#000;transform:scaleX(0.9581);transform-origin:0 0;">SG&amp;A</div>
<div class="a" style="left:378.20px;top:528.09px;font-size:11px;line-height:11px;color:#000;transform:scaleX(0.9543);transform-origin:0 0;">$000&#39;s</div>
<div class="a" style="left:76.70px;top:543.09px;font-size:11px;line-height:11px;color:#000;transform:scaleX(0.9066);transform-origin:0 0;font-weight:bold;">EBITDA</div>
<div class="a" style="left:377.60px;top:543.09px;font-size:11px;line-height:11px;color:#000;transform:scaleX(0.9573);transform-origin:0 0;font-weight:bold;">$000&#39;s</div>
<div class="a" style="left:76.70px;top:559.09px;font-size:11px;line-height:11px;color:#000;transform:scaleX(1.0196);transform-origin:0 0;font-style:italic;">EBITDA Margin</div>
<div class="a" style="left:354.30px;top:559.09px;font-size:11px;line-height:11px;color:#000;transform:scaleX(0.9949);transform-origin:0 0;font-style:italic;">% of Revenues</div>
<div class="a" style="left:76.70px;top:575.09px;font-size:11px;line-height:11px;color:#000;transform:scaleX(1.0150);transform-origin:0 0;">D&amp;A</div>
<div class="a" style="left:378.20px;top:575.09px;font-size:11px;line-height:11px;color:#000;transform:scaleX(0.9543);transform-origin:0 0;">$000&#39;s</div>
<div class="a" style="left:76.70px;top:591.09px;font-size:11px;line-height:11px;color:#000;transform:scaleX(0.8732);transform-origin:0 0;font-weight:bold;">EBIT</div>
<div class="a" style="left:377.60px;top:591.09px;font-size:11px;line-height:11px;color:#000;transform:scaleX(0.9573);transform-origin:0 0;font-weight:bold;">$000&#39;s</div>
<div class="a" style="left:76.70px;top:607.09px;font-size:11px;line-height:11px;color:#000;transform:scaleX(1.0196);transform-origin:0 0;font-style:italic;">EBIT Margin</div>
<div class="a" style="left:354.30px;top:607.09px;font-size:11px;line-height:11px;color:#000;transform:scaleX(0.9949);transform-origin:0 0;font-style:italic;">% of Revenues</div>
<div class="a" style="left:76.70px;top:639.09px;font-size:11px;line-height:11px;color:#000;transform:scaleX(1.0328);transform-origin:0 0;">Financial Expenses</div>
<div class="a" style="left:378.20px;top:639.09px;font-size:11px;line-height:11px;color:#000;transform:scaleX(0.9543);transform-origin:0 0;">$000&#39;s</div>
<div class="a" style="left:76.70px;top:654.09px;font-size:11px;line-height:11px;color:#000;transform:scaleX(1.0806);transform-origin:0 0;">Other Income/(Expense)</div>
<div class="a" style="left:378.20px;top:654.09px;font-size:11px;line-height:11px;color:#000;transform:scaleX(0.9543);transform-origin:0 0;">$000&#39;s</div>
<div class="a" style="left:76.70px;top:671.09px;font-size:11px;line-height:11px;color:#000;transform:scaleX(0.8318);transform-origin:0 0;font-weight:bold;">EBT</div>
<div class="a" style="left:377.60px;top:671.09px;font-size:11px;line-height:11px;color:#000;transform:scaleX(0.9573);transform-origin:0 0;font-weight:bold;">$000&#39;s</div>
<div class="a" style="left:76.70px;top:686.09px;font-size:11px;line-height:11px;color:#000;transform:scaleX(1.0206);transform-origin:0 0;">Taxes</div>
<div class="a" style="left:378.20px;top:686.09px;font-size:11px;line-height:11px;color:#000;transform:scaleX(0.9543);transform-origin:0 0;">$000&#39;s</div>
<div class="a" style="left:76.70px;top:703.09px;font-size:11px;line-height:11px;color:#000;transform:scaleX(1.0272);transform-origin:0 0;font-weight:bold;">Net Income</div>
<div class="a" style="left:377.60px;top:703.09px;font-size:11px;line-height:11px;color:#000;transform:scaleX(0.9573);transform-origin:0 0;font-weight:bold;">$000&#39;s</div>
<div class="a" style="left:76.70px;top:718.09px;font-size:11px;line-height:11px;color:#000;transform:scaleX(1.0950);transform-origin:0 0;font-style:italic;">Net Margin</div>
<div class="a" style="left:354.30px;top:718.09px;font-size:11px;line-height:11px;color:#000;transform:scaleX(0.9949);transform-origin:0 0;font-style:italic;">% of Revenues</div>
<div class="a" style="left:76.70px;top:748.09px;font-size:11px;line-height:11px;color:#000;transform:scaleX(1.0320);transform-origin:0 0;font-style:italic;">Revenue Growth</div>
<div class="a" style="left:354.30px;top:748.09px;font-size:11px;line-height:11px;color:#000;transform:scaleX(0.9949);transform-origin:0 0;font-style:italic;">% of Revenues</div>
<div class="a" style="left:76.70px;top:763.09px;font-size:11px;line-height:11px;color:#000;transform:scaleX(1.0489);transform-origin:0 0;font-style:italic;">Gross Profit Growth</div>
<div class="a" style="left:354.30px;top:763.09px;font-size:11px;line-height:11px;color:#000;transform:scaleX(0.9949);transform-origin:0 0;font-style:italic;">% of Revenues</div>
<div class="a" style="left:76.70px;top:778.09px;font-size:11px;line-height:11px;color:#000;transform:scaleX(1.0061);transform-origin:0 0;font-style:italic;">EBITDA Growth</div>
<div class="a" style="left:354.30px;top:778.09px;font-size:11px;line-height:11px;color:#000;transform:scaleX(0.9949);transform-origin:0 0;font-style:italic;">% of Revenues</div>
<div class="a" style="left:76.70px;top:794.09px;font-size:11px;line-height:11px;color:#000;transform:scaleX(1.0020);transform-origin:0 0;font-style:italic;">EBIT Growth</div>
<div class="a" style="left:354.30px;top:794.09px;font-size:11px;line-height:11px;color:#000;transform:scaleX(0.9949);transform-origin:0 0;font-style:italic;">% of Revenues</div>
<div class="a" style="left:76.70px;top:809.09px;font-size:11px;line-height:11px;color:#000;transform:scaleX(1.0605);transform-origin:0 0;font-style:italic;">Net Income Growth</div>
<div class="a" style="left:354.30px;top:809.09px;font-size:11px;line-height:11px;color:#000;transform:scaleX(0.9949);transform-origin:0 0;font-style:italic;">% of Revenues</div>
<div class="c" style="top:447px;font-size:10.8px;color:#0000ff;right:807px;">25,933</div>
<div class="c" style="top:447px;font-size:10.8px;color:#0000ff;right:741px;">27,522</div>
<div class="c" style="top:447px;font-size:10.8px;color:#0000ff;right:675px;">31,323</div>
<div class="c" style="top:447px;font-size:10.8px;color:#089208;right:610px;">33,475</div>
<div class="c" style="top:447px;font-size:10.8px;color:#089208;right:545px;">35,024</div>
<div class="c" style="top:447px;font-size:10.8px;color:#089208;right:479px;">37,137</div>
<div class="c" style="top:447px;font-size:10.8px;color:#089208;right:413px;">39,123</div>
<div class="c" style="top:447px;font-size:10.8px;color:#089208;right:348px;">41,298</div>
<div class="c" style="top:447px;font-size:10.8px;color:#089208;right:282px;">42,215</div>
<div class="c" style="top:447px;font-size:10.8px;color:#089208;right:217px;">43,270</div>
<div class="c" style="top:447px;font-size:10.8px;color:#089208;right:151px;">44,352</div>
<div class="c" style="top:447px;font-size:10.8px;color:#089208;right:86px;">45,585</div>
<div class="c" style="top:447px;font-size:10.8px;color:#089208;right:20px;">46,597</div>
<div class="c" style="top:462px;font-size:10.6px;color:#000;font-style:italic;left:511.5px;width:200px;text-align:center;">#DIV/0!</div>
<div class="c" style="top:462px;font-size:10.8px;color:#000;font-style:italic;right:738px;">6.1%</div>
<div class="c" style="top:462px;font-size:10.8px;color:#000;font-style:italic;right:672px;">13.8%</div>
<div class="c" style="top:462px;font-size:10.8px;color:#000;font-style:italic;right:607px;">6.9%</div>
<div class="c" style="top:462px;font-size:10.8px;color:#000;font-style:italic;right:542px;">4.6%</div>
<div class="c" style="top:462px;font-size:10.8px;color:#000;font-style:italic;right:476px;">6.0%</div>
<div class="c" style="top:462px;font-size:10.8px;color:#000;font-style:italic;right:410px;">5.3%</div>
<div class="c" style="top:462px;font-size:10.8px;color:#000;font-style:italic;right:345px;">5.6%</div>
<div class="c" style="top:462px;font-size:10.8px;color:#000;font-style:italic;right:279px;">2.2%</div>
<div class="c" style="top:462px;font-size:10.8px;color:#000;font-style:italic;right:214px;">2.5%</div>
<div class="c" style="top:462px;font-size:10.8px;color:#000;font-style:italic;right:148px;">2.5%</div>
<div class="c" style="top:462px;font-size:10.8px;color:#000;font-style:italic;right:83px;">2.8%</div>
<div class="c" style="top:462px;font-size:10.8px;color:#000;font-style:italic;right:17px;">2.2%</div>
<div class="c" style="top:478px;font-size:10.8px;color:#0000ff;right:803px;">(10,793)</div>
<div class="c" style="top:478px;font-size:10.8px;color:#0000ff;right:737px;">(12,092)</div>
<div class="c" style="top:478px;font-size:10.8px;color:#0000ff;right:671px;">(12,615)</div>
<div class="c" style="top:478px;font-size:10.8px;color:#089208;right:606px;">(13,847)</div>
<div class="c" style="top:478px;font-size:10.8px;color:#089208;right:541px;">(14,655)</div>
<div class="c" style="top:478px;font-size:10.8px;color:#089208;right:475px;">(15,644)</div>
<div class="c" style="top:478px;font-size:10.8px;color:#089208;right:409px;">(16,594)</div>
<div class="c" style="top:478px;font-size:10.8px;color:#089208;right:344px;">(17,599)</div>
<div class="c" style="top:478px;font-size:10.8px;color:#089208;right:278px;">(18,066)</div>
<div class="c" style="top:478px;font-size:10.8px;color:#089208;right:213px;">(18,554)</div>
<div class="c" style="top:478px;font-size:10.8px;color:#089208;right:147px;">(19,018)</div>
<div class="c" style="top:478px;font-size:10.8px;color:#089208;right:82px;">(19,578)</div>
<div class="c" style="top:478px;font-size:10.8px;color:#089208;right:16px;">(20,059)</div>
<div class="c" style="top:494px;font-size:10.8px;color:#000;font-weight:bold;right:807px;">15,140</div>
<div class="c" style="top:494px;font-size:10.8px;color:#000;font-weight:bold;right:741px;">15,431</div>
<div class="c" style="top:494px;font-size:10.8px;color:#000;font-weight:bold;right:675px;">18,708</div>
<div class="c" style="top:494px;font-size:10.8px;color:#000;font-weight:bold;right:610px;">19,629</div>
<div class="c" style="top:494px;font-size:10.8px;color:#000;font-weight:bold;right:545px;">20,369</div>
<div class="c" style="top:494px;font-size:10.8px;color:#000;font-weight:bold;right:479px;">21,493</div>
<div class="c" style="top:494px;font-size:10.8px;color:#000;font-weight:bold;right:413px;">22,529</div>
<div class="c" style="top:494px;font-size:10.8px;color:#000;font-weight:bold;right:348px;">23,699</div>
<div class="c" style="top:494px;font-size:10.8px;color:#000;font-weight:bold;right:282px;">24,148</div>
<div class="c" style="top:494px;font-size:10.8px;color:#000;font-weight:bold;right:217px;">24,716</div>
<div class="c" style="top:494px;font-size:10.8px;color:#000;font-weight:bold;right:151px;">25,334</div>
<div class="c" style="top:494px;font-size:10.8px;color:#000;font-weight:bold;right:86px;">26,007</div>
<div class="c" style="top:494px;font-size:10.8px;color:#000;font-weight:bold;right:20px;">26,538</div>
<div class="c" style="top:511px;font-size:10.8px;color:#000;font-style:italic;right:804px;">58.4%</div>
<div class="c" style="top:511px;font-size:10.8px;color:#000;font-style:italic;right:738px;">56.1%</div>
<div class="c" style="top:511px;font-size:10.8px;color:#000;font-style:italic;right:672px;">59.7%</div>
<div class="c" style="top:511px;font-size:10.8px;color:#000;font-style:italic;right:607px;">58.6%</div>
<div class="c" style="top:511px;font-size:10.8px;color:#000;font-style:italic;right:542px;">58.2%</div>
<div class="c" style="top:511px;font-size:10.8px;color:#000;font-style:italic;right:476px;">57.9%</div>
<div class="c" style="top:511px;font-size:10.8px;color:#000;font-style:italic;right:410px;">57.6%</div>
<div class="c" style="top:511px;font-size:10.8px;color:#000;font-style:italic;right:345px;">57.4%</div>
<div class="c" style="top:511px;font-size:10.8px;color:#000;font-style:italic;right:279px;">57.2%</div>
<div class="c" style="top:511px;font-size:10.8px;color:#000;font-style:italic;right:214px;">57.1%</div>
<div class="c" style="top:511px;font-size:10.8px;color:#000;font-style:italic;right:148px;">57.1%</div>
<div class="c" style="top:511px;font-size:10.8px;color:#000;font-style:italic;right:83px;">57.1%</div>
<div class="c" style="top:511px;font-size:10.8px;color:#000;font-style:italic;right:17px;">57.0%</div>
<div class="c" style="top:527px;font-size:10.8px;color:#0000ff;right:803px;">(396)</div>
<div class="c" style="top:527px;font-size:10.8px;color:#0000ff;right:737px;">(416)</div>
<div class="c" style="top:527px;font-size:10.8px;color:#0000ff;right:671px;">(496)</div>
<div class="c" style="top:527px;font-size:10.8px;color:#089208;right:606px;">(525)</div>
<div class="c" style="top:527px;font-size:10.8px;color:#089208;right:541px;">(546)</div>
<div class="c" style="top:527px;font-size:10.8px;color:#089208;right:475px;">(567)</div>
<div class="c" style="top:527px;font-size:10.8px;color:#089208;right:409px;">(587)</div>
<div class="c" style="top:527px;font-size:10.8px;color:#089208;right:344px;">(607)</div>
<div class="c" style="top:527px;font-size:10.8px;color:#089208;right:278px;">(625)</div>
<div class="c" style="top:527px;font-size:10.8px;color:#089208;right:213px;">(642)</div>
<div class="c" style="top:527px;font-size:10.8px;color:#089208;right:147px;">(658)</div>
<div class="c" style="top:527px;font-size:10.8px;color:#089208;right:82px;">(675)</div>
<div class="c" style="top:527px;font-size:10.8px;color:#089208;right:16px;">(694)</div>
<div class="c" style="top:542px;font-size:10.8px;color:#000;font-weight:bold;right:807px;">14,744</div>
<div class="c" style="top:542px;font-size:10.8px;color:#000;font-weight:bold;right:741px;">15,015</div>
<div class="c" style="top:542px;font-size:10.8px;color:#000;font-weight:bold;right:675px;">18,212</div>
<div class="c" style="top:542px;font-size:10.8px;color:#000;font-weight:bold;right:610px;">19,103</div>
<div class="c" style="top:542px;font-size:10.8px;color:#000;font-weight:bold;right:545px;">19,823</div>
<div class="c" style="top:542px;font-size:10.8px;color:#000;font-weight:bold;right:479px;">20,926</div>
<div class="c" style="top:542px;font-size:10.8px;color:#000;font-weight:bold;right:413px;">21,942</div>
<div class="c" style="top:542px;font-size:10.8px;color:#000;font-weight:bold;right:348px;">23,092</div>
<div class="c" style="top:542px;font-size:10.8px;color:#000;font-weight:bold;right:282px;">23,524</div>
<div class="c" style="top:542px;font-size:10.8px;color:#000;font-weight:bold;right:217px;">24,074</div>
<div class="c" style="top:542px;font-size:10.8px;color:#000;font-weight:bold;right:151px;">24,676</div>
<div class="c" style="top:542px;font-size:10.8px;color:#000;font-weight:bold;right:86px;">25,332</div>
<div class="c" style="top:542px;font-size:10.8px;color:#000;font-weight:bold;right:20px;">25,845</div>
<div class="c" style="top:558px;font-size:10.8px;color:#000;font-style:italic;right:804px;">56.9%</div>
<div class="c" style="top:558px;font-size:10.8px;color:#000;font-style:italic;right:738px;">54.6%</div>
<div class="c" style="top:558px;font-size:10.8px;color:#000;font-style:italic;right:672px;">58.1%</div>
<div class="c" style="top:558px;font-size:10.8px;color:#000;font-style:italic;right:607px;">57.1%</div>
<div class="c" style="top:558px;font-size:10.8px;color:#000;font-style:italic;right:542px;">56.6%</div>
<div class="c" style="top:558px;font-size:10.8px;color:#000;font-style:italic;right:476px;">56.3%</div>
<div class="c" style="top:558px;font-size:10.8px;color:#000;font-style:italic;right:410px;">56.1%</div>
<div class="c" style="top:558px;font-size:10.8px;color:#000;font-style:italic;right:345px;">55.9%</div>
<div class="c" style="top:558px;font-size:10.8px;color:#000;font-style:italic;right:279px;">55.7%</div>
<div class="c" style="top:558px;font-size:10.8px;color:#000;font-style:italic;right:214px;">55.6%</div>
<div class="c" style="top:558px;font-size:10.8px;color:#000;font-style:italic;right:148px;">55.6%</div>
<div class="c" style="top:558px;font-size:10.8px;color:#000;font-style:italic;right:83px;">55.6%</div>
<div class="c" style="top:558px;font-size:10.8px;color:#000;font-style:italic;right:17px;">55.5%</div>
<div class="c" style="top:574px;font-size:10.8px;color:#0000ff;right:803px;">(1,313)</div>
<div class="c" style="top:574px;font-size:10.8px;color:#0000ff;right:737px;">(1,490)</div>
<div class="c" style="top:574px;font-size:10.8px;color:#0000ff;right:671px;">(1,604)</div>
<div class="c" style="top:574px;font-size:10.8px;color:#089208;right:606px;">(1,578)</div>
<div class="c" style="top:574px;font-size:10.8px;color:#089208;right:541px;">(1,698)</div>
<div class="c" style="top:574px;font-size:10.8px;color:#089208;right:475px;">(1,824)</div>
<div class="c" style="top:574px;font-size:10.8px;color:#089208;right:409px;">(1,957)</div>
<div class="c" style="top:574px;font-size:10.8px;color:#089208;right:344px;">(2,096)</div>
<div class="c" style="top:574px;font-size:10.8px;color:#089208;right:278px;">(2,243)</div>
<div class="c" style="top:574px;font-size:10.8px;color:#089208;right:213px;">(2,393)</div>
<div class="c" style="top:574px;font-size:10.8px;color:#089208;right:147px;">(2,545)</div>
<div class="c" style="top:574px;font-size:10.8px;color:#089208;right:82px;">(2,435)</div>
<div class="c" style="top:574px;font-size:10.8px;color:#089208;right:16px;">(2,572)</div>
<div class="c" style="top:590px;font-size:10.8px;color:#000;font-weight:bold;right:807px;">13,431</div>
<div class="c" style="top:590px;font-size:10.8px;color:#000;font-weight:bold;right:741px;">13,525</div>
<div class="c" style="top:590px;font-size:10.8px;color:#000;font-weight:bold;right:675px;">16,608</div>
<div class="c" style="top:590px;font-size:10.8px;color:#000;font-weight:bold;right:610px;">17,526</div>
<div class="c" style="top:590px;font-size:10.8px;color:#000;font-weight:bold;right:545px;">18,124</div>
<div class="c" style="top:590px;font-size:10.8px;color:#000;font-weight:bold;right:479px;">19,102</div>
<div class="c" style="top:590px;font-size:10.8px;color:#000;font-weight:bold;right:413px;">19,985</div>
<div class="c" style="top:590px;font-size:10.8px;color:#000;font-weight:bold;right:348px;">20,996</div>
<div class="c" style="top:590px;font-size:10.8px;color:#000;font-weight:bold;right:282px;">21,281</div>
<div class="c" style="top:590px;font-size:10.8px;color:#000;font-weight:bold;right:217px;">21,682</div>
<div class="c" style="top:590px;font-size:10.8px;color:#000;font-weight:bold;right:151px;">22,131</div>
<div class="c" style="top:590px;font-size:10.8px;color:#000;font-weight:bold;right:86px;">22,897</div>
<div class="c" style="top:590px;font-size:10.8px;color:#000;font-weight:bold;right:20px;">23,273</div>
<div class="c" style="top:606px;font-size:10.8px;color:#000;font-style:italic;right:804px;">51.8%</div>
<div class="c" style="top:606px;font-size:10.8px;color:#000;font-style:italic;right:738px;">49.1%</div>
<div class="c" style="top:606px;font-size:10.8px;color:#000;font-style:italic;right:672px;">53.0%</div>
<div class="c" style="top:606px;font-size:10.8px;color:#000;font-style:italic;right:607px;">52.4%</div>
<div class="c" style="top:606px;font-size:10.8px;color:#000;font-style:italic;right:542px;">51.7%</div>
<div class="c" style="top:606px;font-size:10.8px;color:#000;font-style:italic;right:476px;">51.4%</div>
<div class="c" style="top:606px;font-size:10.8px;color:#000;font-style:italic;right:410px;">51.1%</div>
<div class="c" style="top:606px;font-size:10.8px;color:#000;font-style:italic;right:345px;">50.8%</div>
<div class="c" style="top:606px;font-size:10.8px;color:#000;font-style:italic;right:279px;">50.4%</div>
<div class="c" style="top:606px;font-size:10.8px;color:#000;font-style:italic;right:214px;">50.1%</div>
<div class="c" style="top:606px;font-size:10.8px;color:#000;font-style:italic;right:148px;">49.9%</div>
<div class="c" style="top:606px;font-size:10.8px;color:#000;font-style:italic;right:83px;">50.2%</div>
<div class="c" style="top:606px;font-size:10.8px;color:#000;font-style:italic;right:17px;">49.9%</div>
<div class="c" style="top:638px;font-size:10.8px;color:#0000ff;right:803px;">(602)</div>
<div class="c" style="top:638px;font-size:10.8px;color:#0000ff;right:737px;">(602)</div>
<div class="c" style="top:638px;font-size:10.8px;color:#0000ff;right:671px;">(938)</div>
<div class="c" style="top:638px;font-size:10.8px;color:#089208;right:606px;">(957)</div>
<div class="c" style="top:638px;font-size:10.8px;color:#089208;right:541px;">(1,030)</div>
<div class="c" style="top:638px;font-size:10.8px;color:#089208;right:475px;">(999)</div>
<div class="c" style="top:638px;font-size:10.8px;color:#089208;right:409px;">(974)</div>
<div class="c" style="top:638px;font-size:10.8px;color:#089208;right:344px;">(915)</div>
<div class="c" style="top:638px;font-size:10.8px;color:#089208;right:278px;">(815)</div>
<div class="c" style="top:638px;font-size:10.8px;color:#089208;right:213px;">(729)</div>
<div class="c" style="top:638px;font-size:10.8px;color:#089208;right:147px;">(640)</div>
<div class="c" style="top:638px;font-size:10.8px;color:#089208;right:82px;">(602)</div>
<div class="c" style="top:638px;font-size:10.8px;color:#089208;right:16px;">(614)</div>
<div class="c" style="top:653px;font-size:10.8px;color:#0000ff;right:807px;">6</div>
<div class="c" style="top:653px;font-size:10.8px;color:#0000ff;right:741px;">6</div>
<div class="c" style="top:670px;font-size:10.8px;color:#000;font-weight:bold;right:807px;">12,836</div>
<div class="c" style="top:670px;font-size:10.8px;color:#000;font-weight:bold;right:741px;">12,930</div>
<div class="c" style="top:670px;font-size:10.8px;color:#000;font-weight:bold;right:675px;">15,670</div>
<div class="c" style="top:670px;font-size:10.8px;color:#000;font-weight:bold;right:610px;">16,569</div>
<div class="c" style="top:670px;font-size:10.8px;color:#000;font-weight:bold;right:545px;">17,095</div>
<div class="c" style="top:670px;font-size:10.8px;color:#000;font-weight:bold;right:479px;">18,103</div>
<div class="c" style="top:670px;font-size:10.8px;color:#000;font-weight:bold;right:413px;">19,012</div>
<div class="c" style="top:670px;font-size:10.8px;color:#000;font-weight:bold;right:348px;">20,080</div>
<div class="c" style="top:670px;font-size:10.8px;color:#000;font-weight:bold;right:282px;">20,465</div>
<div class="c" style="top:670px;font-size:10.8px;color:#000;font-weight:bold;right:217px;">20,953</div>
<div class="c" style="top:670px;font-size:10.8px;color:#000;font-weight:bold;right:151px;">21,491</div>
<div class="c" style="top:670px;font-size:10.8px;color:#000;font-weight:bold;right:86px;">22,296</div>
<div class="c" style="top:670px;font-size:10.8px;color:#000;font-weight:bold;right:20px;">22,658</div>
<div class="c" style="top:685px;font-size:10.8px;color:#0000ff;right:803px;">(432)</div>
<div class="c" style="top:685px;font-size:10.8px;color:#0000ff;right:737px;">(432)</div>
<div class="c" style="top:685px;font-size:10.8px;color:#0000ff;right:671px;">(244)</div>
<div class="c" style="top:685px;font-size:10.8px;color:#089208;right:606px;">(4,971)</div>
<div class="c" style="top:685px;font-size:10.8px;color:#089208;right:541px;">(5,128)</div>
<div class="c" style="top:685px;font-size:10.8px;color:#089208;right:475px;">(5,431)</div>
<div class="c" style="top:685px;font-size:10.8px;color:#089208;right:409px;">(5,703)</div>
<div class="c" style="top:685px;font-size:10.8px;color:#089208;right:344px;">(6,024)</div>
<div class="c" style="top:685px;font-size:10.8px;color:#089208;right:278px;">(6,140)</div>
<div class="c" style="top:685px;font-size:10.8px;color:#089208;right:213px;">(6,286)</div>
<div class="c" style="top:685px;font-size:10.8px;color:#089208;right:147px;">(6,447)</div>
<div class="c" style="top:685px;font-size:10.8px;color:#089208;right:82px;">(6,689)</div>
<div class="c" style="top:685px;font-size:10.8px;color:#089208;right:16px;">(6,797)</div>
<div class="c" style="top:702px;font-size:10.8px;color:#000;font-weight:bold;right:807px;">12,404</div>
<div class="c" style="top:702px;font-size:10.8px;color:#000;font-weight:bold;right:741px;">12,498</div>
<div class="c" style="top:702px;font-size:10.8px;color:#000;font-weight:bold;right:675px;">15,426</div>
<div class="c" style="top:702px;font-size:10.8px;color:#000;font-weight:bold;right:610px;">11,598</div>
<div class="c" style="top:702px;font-size:10.8px;color:#000;font-weight:bold;right:545px;">11,966</div>
<div class="c" style="top:702px;font-size:10.8px;color:#000;font-weight:bold;right:479px;">12,672</div>
<div class="c" style="top:702px;font-size:10.8px;color:#000;font-weight:bold;right:413px;">13,308</div>
<div class="c" style="top:702px;font-size:10.8px;color:#000;font-weight:bold;right:348px;">14,056</div>
<div class="c" style="top:702px;font-size:10.8px;color:#000;font-weight:bold;right:282px;">14,326</div>
<div class="c" style="top:702px;font-size:10.8px;color:#000;font-weight:bold;right:217px;">14,667</div>
<div class="c" style="top:702px;font-size:10.8px;color:#000;font-weight:bold;right:151px;">15,043</div>
<div class="c" style="top:702px;font-size:10.8px;color:#000;font-weight:bold;right:86px;">15,607</div>
<div class="c" style="top:702px;font-size:10.8px;color:#000;font-weight:bold;right:20px;">15,861</div>
<div class="c" style="top:717px;font-size:10.8px;color:#000;font-style:italic;right:804px;">47.8%</div>
<div class="c" style="top:717px;font-size:10.8px;color:#000;font-style:italic;right:738px;">45.4%</div>
<div class="c" style="top:717px;font-size:10.8px;color:#000;font-style:italic;right:672px;">49.2%</div>
<div class="c" style="top:717px;font-size:10.8px;color:#000;font-style:italic;right:607px;">34.6%</div>
<div class="c" style="top:717px;font-size:10.8px;color:#000;font-style:italic;right:542px;">34.2%</div>
<div class="c" style="top:717px;font-size:10.8px;color:#000;font-style:italic;right:476px;">34.1%</div>
<div class="c" style="top:717px;font-size:10.8px;color:#000;font-style:italic;right:410px;">34.0%</div>
<div class="c" style="top:717px;font-size:10.8px;color:#000;font-style:italic;right:345px;">34.0%</div>
<div class="c" style="top:717px;font-size:10.8px;color:#000;font-style:italic;right:279px;">33.9%</div>
<div class="c" style="top:717px;font-size:10.8px;color:#000;font-style:italic;right:214px;">33.9%</div>
<div class="c" style="top:717px;font-size:10.8px;color:#000;font-style:italic;right:148px;">33.9%</div>
<div class="c" style="top:717px;font-size:10.8px;color:#000;font-style:italic;right:83px;">34.2%</div>
<div class="c" style="top:717px;font-size:10.8px;color:#000;font-style:italic;right:17px;">34.0%</div>
<div class="c" style="top:747px;font-size:10.8px;color:#000;font-style:italic;right:738px;">6.1%</div>
<div class="c" style="top:747px;font-size:10.8px;color:#000;font-style:italic;right:672px;">13.8%</div>
<div class="c" style="top:747px;font-size:10.8px;color:#000;font-style:italic;right:607px;">6.9%</div>
<div class="c" style="top:747px;font-size:10.8px;color:#000;font-style:italic;right:542px;">4.6%</div>
<div class="c" style="top:747px;font-size:10.8px;color:#000;font-style:italic;right:476px;">6.0%</div>
<div class="c" style="top:747px;font-size:10.8px;color:#000;font-style:italic;right:410px;">5.3%</div>
<div class="c" style="top:747px;font-size:10.8px;color:#000;font-style:italic;right:345px;">5.6%</div>
<div class="c" style="top:747px;font-size:10.8px;color:#000;font-style:italic;right:279px;">2.2%</div>
<div class="c" style="top:747px;font-size:10.8px;color:#000;font-style:italic;right:214px;">2.5%</div>
<div class="c" style="top:747px;font-size:10.8px;color:#000;font-style:italic;right:148px;">2.5%</div>
<div class="c" style="top:747px;font-size:10.8px;color:#000;font-style:italic;right:83px;">2.8%</div>
<div class="c" style="top:747px;font-size:10.8px;color:#000;font-style:italic;right:17px;">2.2%</div>
<div class="c" style="top:762px;font-size:10.8px;color:#000;font-style:italic;right:738px;">1.9%</div>
<div class="c" style="top:762px;font-size:10.8px;color:#000;font-style:italic;right:672px;">21.2%</div>
<div class="c" style="top:762px;font-size:10.8px;color:#000;font-style:italic;right:607px;">4.9%</div>
<div class="c" style="top:762px;font-size:10.8px;color:#000;font-style:italic;right:542px;">3.8%</div>
<div class="c" style="top:762px;font-size:10.8px;color:#000;font-style:italic;right:476px;">5.5%</div>
<div class="c" style="top:762px;font-size:10.8px;color:#000;font-style:italic;right:410px;">4.8%</div>
<div class="c" style="top:762px;font-size:10.8px;color:#000;font-style:italic;right:345px;">5.2%</div>
<div class="c" style="top:762px;font-size:10.8px;color:#000;font-style:italic;right:279px;">1.9%</div>
<div class="c" style="top:762px;font-size:10.8px;color:#000;font-style:italic;right:214px;">2.4%</div>
<div class="c" style="top:762px;font-size:10.8px;color:#000;font-style:italic;right:148px;">2.5%</div>
<div class="c" style="top:762px;font-size:10.8px;color:#000;font-style:italic;right:83px;">2.7%</div>
<div class="c" style="top:762px;font-size:10.8px;color:#000;font-style:italic;right:17px;">2.0%</div>
<div class="c" style="top:777px;font-size:10.8px;color:#000;font-style:italic;right:738px;">1.8%</div>
<div class="c" style="top:777px;font-size:10.8px;color:#000;font-style:italic;right:672px;">21.3%</div>
<div class="c" style="top:777px;font-size:10.8px;color:#000;font-style:italic;right:607px;">4.9%</div>
<div class="c" style="top:777px;font-size:10.8px;color:#000;font-style:italic;right:542px;">3.8%</div>
<div class="c" style="top:777px;font-size:10.8px;color:#000;font-style:italic;right:476px;">5.6%</div>
<div class="c" style="top:777px;font-size:10.8px;color:#000;font-style:italic;right:410px;">4.9%</div>
<div class="c" style="top:777px;font-size:10.8px;color:#000;font-style:italic;right:345px;">5.2%</div>
<div class="c" style="top:777px;font-size:10.8px;color:#000;font-style:italic;right:279px;">1.9%</div>
<div class="c" style="top:777px;font-size:10.8px;color:#000;font-style:italic;right:214px;">2.3%</div>
<div class="c" style="top:777px;font-size:10.8px;color:#000;font-style:italic;right:148px;">2.5%</div>
<div class="c" style="top:777px;font-size:10.8px;color:#000;font-style:italic;right:83px;">2.7%</div>
<div class="c" style="top:777px;font-size:10.8px;color:#000;font-style:italic;right:17px;">2.0%</div>
<div class="c" style="top:793px;font-size:10.8px;color:#000;font-style:italic;right:738px;">0.7%</div>
<div class="c" style="top:793px;font-size:10.8px;color:#000;font-style:italic;right:672px;">22.8%</div>
<div class="c" style="top:793px;font-size:10.8px;color:#000;font-style:italic;right:607px;">5.5%</div>
<div class="c" style="top:793px;font-size:10.8px;color:#000;font-style:italic;right:542px;">3.4%</div>
<div class="c" style="top:793px;font-size:10.8px;color:#000;font-style:italic;right:476px;">5.4%</div>
<div class="c" style="top:793px;font-size:10.8px;color:#000;font-style:italic;right:410px;">4.6%</div>
<div class="c" style="top:793px;font-size:10.8px;color:#000;font-style:italic;right:345px;">5.1%</div>
<div class="c" style="top:793px;font-size:10.8px;color:#000;font-style:italic;right:279px;">1.4%</div>
<div class="c" style="top:793px;font-size:10.8px;color:#000;font-style:italic;right:214px;">1.9%</div>
<div class="c" style="top:793px;font-size:10.8px;color:#000;font-style:italic;right:148px;">2.1%</div>
<div class="c" style="top:793px;font-size:10.8px;color:#000;font-style:italic;right:83px;">3.5%</div>
<div class="c" style="top:793px;font-size:10.8px;color:#000;font-style:italic;right:17px;">1.6%</div>
<div class="c" style="top:808px;font-size:10.8px;color:#000;font-style:italic;right:738px;">0.8%</div>
<div class="c" style="top:808px;font-size:10.8px;color:#000;font-style:italic;right:672px;">23.4%</div>
<div class="c" style="top:808px;font-size:10.8px;color:#000;font-style:italic;right:607px;">-24.8%</div>
<div class="c" style="top:808px;font-size:10.8px;color:#000;font-style:italic;right:542px;">3.2%</div>
<div class="c" style="top:808px;font-size:10.8px;color:#000;font-style:italic;right:476px;">5.9%</div>
<div class="c" style="top:808px;font-size:10.8px;color:#000;font-style:italic;right:410px;">5.0%</div>
<div class="c" style="top:808px;font-size:10.8px;color:#000;font-style:italic;right:345px;">5.6%</div>
<div class="c" style="top:808px;font-size:10.8px;color:#000;font-style:italic;right:279px;">1.9%</div>
<div class="c" style="top:808px;font-size:10.8px;color:#000;font-style:italic;right:214px;">2.4%</div>
<div class="c" style="top:808px;font-size:10.8px;color:#000;font-style:italic;right:148px;">2.6%</div>
<div class="c" style="top:808px;font-size:10.8px;color:#000;font-style:italic;right:83px;">3.7%</div>
<div class="c" style="top:808px;font-size:10.8px;color:#000;font-style:italic;right:17px;">1.6%</div>
<div class="tri" style="left:574px;top:446px"></div>
<div class="tri" style="left:639px;top:446px"></div>
<div class="tri" style="left:705px;top:446px"></div>
<div class="tri" style="left:771px;top:446px"></div>
<div class="tri" style="left:574px;top:477px"></div>
<div class="tri" style="left:639px;top:477px"></div>
<div class="tri" style="left:705px;top:477px"></div>
<div class="tri" style="left:771px;top:477px"></div>
<div class="tri" style="left:574px;top:526px"></div>
<div class="tri" style="left:639px;top:526px"></div>
<div class="tri" style="left:705px;top:526px"></div>
<div class="tri" style="left:771px;top:526px"></div>
<div class="tri" style="left:574px;top:573px"></div>
<div class="tri" style="left:639px;top:573px"></div>
<div class="tri" style="left:705px;top:573px"></div>
<div class="tri" style="left:771px;top:573px"></div>
<div class="tri" style="left:574px;top:637px"></div>
<div class="tri" style="left:639px;top:637px"></div>
<div class="tri" style="left:705px;top:637px"></div>
<div class="tri" style="left:771px;top:637px"></div>
<div class="tri" style="left:574px;top:653px"></div>
<div class="tri" style="left:639px;top:653px"></div>
<div class="tri" style="left:705px;top:653px"></div>
<div class="tri" style="left:771px;top:653px"></div>
<div class="tri" style="left:574px;top:685px"></div>
<div class="tri" style="left:639px;top:685px"></div>
<div class="tri" style="left:705px;top:685px"></div>
<div class="tri" style="left:771px;top:685px"></div>
<div class="a" style="left:580px;top:462px;width:0;height:0;border-top:6px solid #107c41;border-right:6px solid transparent"></div>
<div class="a" style="left:513px;top:230px;width:1px;height:596px;background:#9e9e9e"></div>
<div class="a" style="left:0;top:399px;width:1445px;height:1px;background:#9e9e9e"></div>
<div class="a" style="left:775px;top:323px;width:1px;height:503px;background:repeating-linear-gradient(to bottom,#666 0 1px,transparent 1px 2px)"></div>
<div class="a" style="left:74px;top:745px;width:1357px;height:1px;background:repeating-linear-gradient(to right,#666 0 1px,transparent 1px 2px)"></div>
<div class="a" style="left:74px;top:822px;width:1357px;height:1px;background:repeating-linear-gradient(to right,#666 0 1px,transparent 1px 2px)"></div>
<div class="a" style="left:74px;top:745px;width:1px;height:78px;background:repeating-linear-gradient(to bottom,#666 0 1px,transparent 1px 2px)"></div>
<div class="a" style="left:1430px;top:745px;width:1px;height:78px;background:repeating-linear-gradient(to bottom,#666 0 1px,transparent 1px 2px)"></div>
<div class="a" style="left:709px;top:587px;width:68px;height:18px;border:2px solid #107c41"></div>
<div class="a" style="left:773px;top:602px;width:5px;height:5px;background:#107c41;border:1px solid #fff"></div>
<div class="a" style="left:7px;top:432px;width:1.5px;height:390px;background:#999"></div>
<div class="a" style="left:7px;top:432px;width:6px;height:1.5px;background:#999"></div>
<div class="a" style="left:3px;top:824px;width:15px;height:2px;background:#9a9a9a"></div>
<div class="a" style="left:23px;top:437px;width:2px;height:2px;background:#999"></div>
<div class="a" style="left:23px;top:453px;width:2px;height:2px;background:#999"></div>
<div class="a" style="left:23px;top:468px;width:2px;height:2px;background:#999"></div>
<div class="a" style="left:23px;top:484px;width:2px;height:2px;background:#999"></div>
<div class="a" style="left:23px;top:500px;width:2px;height:2px;background:#999"></div>
<div class="a" style="left:23px;top:516px;width:2px;height:2px;background:#999"></div>
<div class="a" style="left:23px;top:533px;width:2px;height:2px;background:#999"></div>
<div class="a" style="left:23px;top:548px;width:2px;height:2px;background:#999"></div>
<div class="a" style="left:23px;top:564px;width:2px;height:2px;background:#999"></div>
<div class="a" style="left:23px;top:580px;width:2px;height:2px;background:#999"></div>
<div class="a" style="left:23px;top:596px;width:2px;height:2px;background:#999"></div>
<div class="a" style="left:23px;top:612px;width:2px;height:2px;background:#999"></div>
<div class="a" style="left:23px;top:628px;width:2px;height:2px;background:#999"></div>
<div class="a" style="left:23px;top:644px;width:2px;height:2px;background:#999"></div>
<div class="a" style="left:23px;top:659px;width:2px;height:2px;background:#999"></div>
<div class="a" style="left:23px;top:675px;width:2px;height:2px;background:#999"></div>
<div class="a" style="left:23px;top:691px;width:2px;height:2px;background:#999"></div>
<div class="a" style="left:23px;top:707px;width:2px;height:2px;background:#999"></div>
<div class="a" style="left:23px;top:723px;width:2px;height:2px;background:#999"></div>
<div class="a" style="left:23px;top:738px;width:2px;height:2px;background:#999"></div>
<div class="a" style="left:23px;top:753px;width:2px;height:2px;background:#999"></div>
<div class="a" style="left:23px;top:768px;width:2px;height:2px;background:#999"></div>
<div class="a" style="left:23px;top:783px;width:2px;height:2px;background:#999"></div>
<div class="a" style="left:23px;top:799px;width:2px;height:2px;background:#999"></div>
<div class="a" style="left:23px;top:814px;width:2px;height:2px;background:#999"></div>
</body></html>
